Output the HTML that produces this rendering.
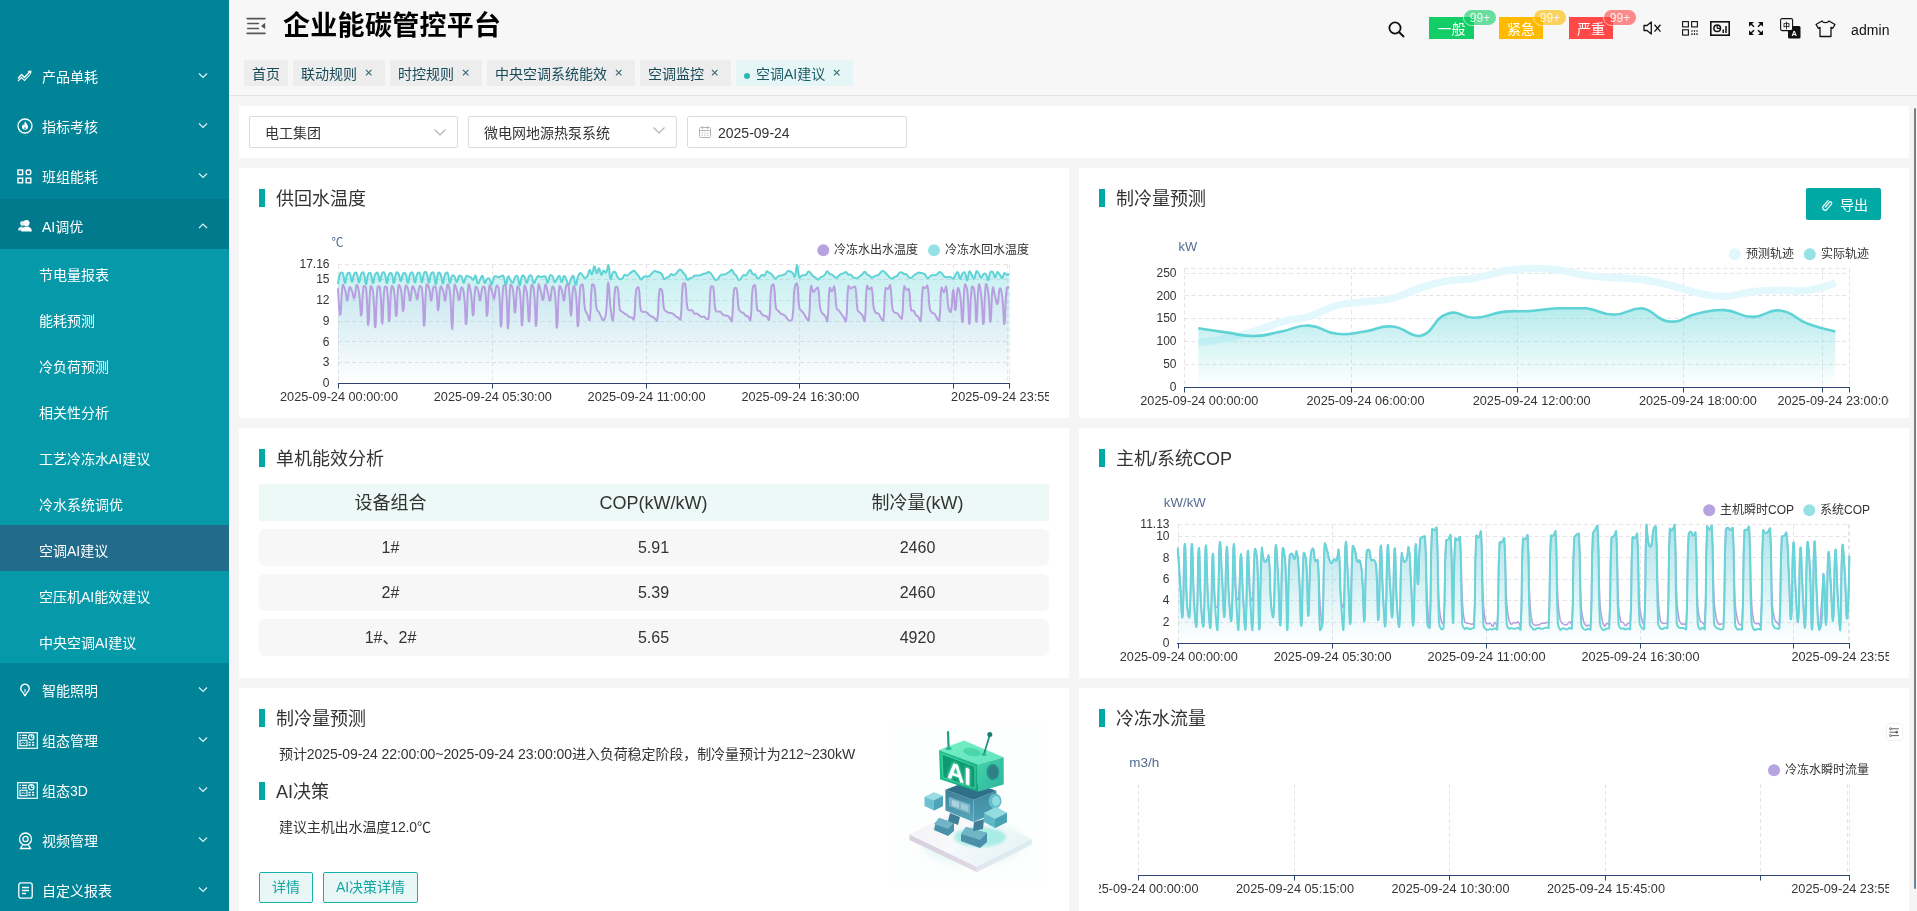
<!DOCTYPE html><html lang="zh-CN"><head><meta charset="utf-8"><title>企业能碳管控平台</title><style>
*{box-sizing:border-box;margin:0;padding:0}
html,body{width:1917px;height:911px;overflow:hidden}
html{background:#f5f5f5}
body{position:relative;background:#f5f5f5;opacity:.9999;font-family:"Liberation Sans", "Noto Sans CJK SC", sans-serif;font-size:14px;color:#333}
.abs{position:absolute}
#side{position:absolute;left:0;top:0;width:229px;height:911px;background:#028498;color:#fff;overflow:hidden}
#side .it{position:absolute;left:0;width:229px;height:50px;line-height:50px;font-size:14px;white-space:nowrap}
#side .it .tx{position:absolute;left:42px;top:3px}
#side .it svg.ic{position:absolute;left:17px;top:19px}
#side .it svg.ar{position:absolute;left:198px;top:23px}
#side .sub{position:absolute;left:0;width:229px;height:46px;line-height:46px;font-size:14px;background:#0699a9;white-space:nowrap}
#side .sub span{position:absolute;left:39px;top:3px}
#side .sub.on{background:#226b8a}
#head{position:absolute;left:229px;top:0;width:1688px;height:96px;background:#f7f7f7;border-bottom:1px solid #e2e2e2}
.title{position:absolute;left:54px;top:7px;letter-spacing:.3px;font-size:27px;font-weight:bold;color:#000;line-height:38px;white-space:nowrap;}
.tag{position:absolute;top:60px;height:26px;line-height:26px;background:#ededed;color:#174a58;font-size:14px;white-space:nowrap}
.tag span{position:absolute;top:1px}
.tag .x{font-size:12px;color:#1d4e5f}
.tag.on{background:#e6f6f6;color:#1c5a66}
.card{position:absolute;background:#fff}
.ct{position:absolute;font-size:18px;color:#333;line-height:26px;white-space:nowrap}
.bar{position:absolute;width:6px;height:18px;background:#00a9a3}
.sel{position:absolute;top:10px;height:32px;border:1px solid #dcdcdc;border-radius:2px;background:#fff;font-size:14px;line-height:30px;color:#333;white-space:nowrap}
.row{position:absolute;left:20px;width:790px;height:37.2px;background:#f7f7f7;border-radius:6px;font-size:16px;line-height:37px;color:#333}
.row span,.th span{position:absolute;top:0;width:263px;text-align:center}
.th span{top:1px}
.th{position:absolute;left:20px;width:790px;height:37px;background:#edf9f7;font-size:18px;line-height:37px;color:#333}
.btn{position:absolute;height:30.4px;line-height:28.4px;border:1px solid #18b2ac;background:#e8f7f6;color:#10a6a2;font-size:14px;text-align:center;border-radius:2px;white-space:nowrap}
svg text{font-family:"Liberation Sans", "Noto Sans CJK SC", sans-serif}
</style></head><body>
<div id="side"><div class="it" style="top:49px"><svg class="ic" style="top:21px" width="16" height="12" viewBox="0 0 16 12"><path d="M1 8.5 L4.5 4.5 L7.5 7.5 L12.5 2" fill="none" stroke="#fff" stroke-width="1.3"/><path d="M1 11 L4.5 7.5 L7.5 10.5 L13 4.5" fill="none" stroke="#fff" stroke-width="1.1"/><path d="M10.5 1 L14.5 0.5 L14 4.5 Z" fill="#fff"/></svg><span class="tx">产品单耗</span><svg class="ar" width="10" height="7" viewBox="0 0 10 7"><path d="M1 1.5 L5 5.5 L9 1.5" fill="none" stroke="#fff" stroke-width="1.1" opacity=".9"/></svg></div><div class="it" style="top:99px"><svg class="ic" style="top:19px" width="16" height="16" viewBox="0 0 16 16"><circle cx="8" cy="8" r="7" fill="none" stroke="#fff" stroke-width="1.3"/><path d="M8 3.2 C8.6 5 11 6.2 11 8.8 A3 3 0 0 1 5 8.8 C5 7.6 5.6 7 6.2 6.2 C6.6 7 6.9 7.2 7.3 7.4 C7.2 6 7.4 4.6 8 3.2 Z" fill="#fff"/><path d="M8 9 C8.8 9.8 9 10.6 8 11.6 C7 10.6 7.2 9.8 8 9Z" fill="#028498"/></svg><span class="tx">指标考核</span><svg class="ar" width="10" height="7" viewBox="0 0 10 7"><path d="M1 1.5 L5 5.5 L9 1.5" fill="none" stroke="#fff" stroke-width="1.1" opacity=".9"/></svg></div><div class="it" style="top:149px"><svg class="ic" style="top:20px" width="15" height="15" viewBox="0 0 15 15"><g fill="none" stroke="#fff" stroke-width="1.4"><rect x="1" y="1" width="4.6" height="4.6"/><rect x="9.2" y="1" width="4.6" height="4.6" rx="1.6"/><rect x="1" y="9.2" width="4.6" height="4.6"/><rect x="9.2" y="9.2" width="4.6" height="4.6"/></g></svg><span class="tx">班组能耗</span><svg class="ar" width="10" height="7" viewBox="0 0 10 7"><path d="M1 1.5 L5 5.5 L9 1.5" fill="none" stroke="#fff" stroke-width="1.1" opacity=".9"/></svg></div><div class="it" style="top:199px;background:#007a8c"><svg class="ic" style="top:19.5px" width="16" height="14" viewBox="0 0 16 14"><circle cx="5.5" cy="4.5" r="2.4" fill="#fff" opacity=".85"/><path d="M1 11.5 C1 8.5 3 7.5 5.5 7.5 V11.5Z" fill="#fff" opacity=".85"/><circle cx="9.5" cy="4" r="3.1" fill="#fff"/><path d="M4.2 12.5 C4.2 9 6.5 7.6 9.5 7.6 C12.5 7.6 14.8 9 14.8 12.5 Z" fill="#fff"/></svg><span class="tx">AI调优</span><svg class="ar" width="10" height="7" viewBox="0 0 10 7"><path d="M1 6 L5 2 L9 6" fill="none" stroke="#fff" stroke-width="1.1" opacity=".9"/></svg></div><div class="sub" style="top:249px"><span>节电量报表</span></div><div class="sub" style="top:295px"><span>能耗预测</span></div><div class="sub" style="top:341px"><span>冷负荷预测</span></div><div class="sub" style="top:387px"><span>相关性分析</span></div><div class="sub" style="top:433px"><span>工艺冷冻水AI建议</span></div><div class="sub" style="top:479px"><span>冷水系统调优</span></div><div class="sub on" style="top:525px"><span>空调AI建议</span></div><div class="sub" style="top:571px"><span>空压机AI能效建议</span></div><div class="sub" style="top:617px"><span>中央空调AI建议</span></div><div class="it" style="top:663px"><svg class="ic" style="left:19px;top:20px" width="12" height="15" viewBox="0 0 12 15"><path d="M6 1.2 A4.3 4.3 0 0 1 8.4 9 L6 12.8 L3.6 9 A4.3 4.3 0 0 1 6 1.2Z" fill="none" stroke="#fff" stroke-width="1.3" stroke-linejoin="round"/><path d="M6 6 V9.5" stroke="#fff" stroke-width="1"/></svg><span class="tx">智能照明</span><svg class="ar" width="10" height="7" viewBox="0 0 10 7"><path d="M1 1.5 L5 5.5 L9 1.5" fill="none" stroke="#fff" stroke-width="1.1" opacity=".9"/></svg></div><div class="it" style="top:713px"><svg class="ic" style="left:17px;top:18.6px" width="21" height="17" viewBox="0 0 21 17"><rect x="0.7" y="0.7" width="19.6" height="15.6" fill="none" stroke="#fff" stroke-width="1.2"/><path d="M2.6 3.3h1.2M5 3.3h5M2.6 5.8h1.2M5 5.8h5" stroke="#fff" stroke-width="1.2"/><rect x="3" y="8.3" width="7" height="5.4" fill="none" stroke="#fff" stroke-width="1.1"/><path d="M4.2 12.2l1.6-2 1.4 1.4 1.4-1.2" stroke="#fff" stroke-width="0.8" fill="none"/><circle cx="14.3" cy="5.3" r="2.7" fill="none" stroke="#fff" stroke-width="1.1"/><path d="M14.3 5.3V2.6M14.3 5.3H17" stroke="#fff" stroke-width="0.9"/><path d="M11.5 10.5h2.2M15 10.5h2.2M11.5 13h2.2M15 13h2.2" stroke="#fff" stroke-width="1.3"/></svg><span class="tx">组态管理</span><svg class="ar" width="10" height="7" viewBox="0 0 10 7"><path d="M1 1.5 L5 5.5 L9 1.5" fill="none" stroke="#fff" stroke-width="1.1" opacity=".9"/></svg></div><div class="it" style="top:763px"><svg class="ic" style="left:17px;top:18.6px" width="21" height="17" viewBox="0 0 21 17"><rect x="0.7" y="0.7" width="19.6" height="15.6" fill="none" stroke="#fff" stroke-width="1.2"/><path d="M2.6 3.3h1.2M5 3.3h5M2.6 5.8h1.2M5 5.8h5" stroke="#fff" stroke-width="1.2"/><rect x="3" y="8.3" width="7" height="5.4" fill="none" stroke="#fff" stroke-width="1.1"/><path d="M4.2 12.2l1.6-2 1.4 1.4 1.4-1.2" stroke="#fff" stroke-width="0.8" fill="none"/><circle cx="14.3" cy="5.3" r="2.7" fill="none" stroke="#fff" stroke-width="1.1"/><path d="M14.3 5.3V2.6M14.3 5.3H17" stroke="#fff" stroke-width="0.9"/><path d="M11.5 10.5h2.2M15 10.5h2.2M11.5 13h2.2M15 13h2.2" stroke="#fff" stroke-width="1.3"/></svg><span class="tx">组态3D</span><svg class="ar" width="10" height="7" viewBox="0 0 10 7"><path d="M1 1.5 L5 5.5 L9 1.5" fill="none" stroke="#fff" stroke-width="1.1" opacity=".9"/></svg></div><div class="it" style="top:813px"><svg class="ic" style="left:18px;top:18.5px" width="15" height="18" viewBox="0 0 15 18"><circle cx="7.5" cy="7" r="6" fill="none" stroke="#fff" stroke-width="1.3"/><circle cx="7.5" cy="7" r="2.6" fill="none" stroke="#fff" stroke-width="1.3"/><path d="M4.5 13 L2.5 16.5 H12.5 L10.5 13" fill="none" stroke="#fff" stroke-width="1.3"/></svg><span class="tx">视频管理</span><svg class="ar" width="10" height="7" viewBox="0 0 10 7"><path d="M1 1.5 L5 5.5 L9 1.5" fill="none" stroke="#fff" stroke-width="1.1" opacity=".9"/></svg></div><div class="it" style="top:863px"><svg class="ic" style="left:18px;top:18.5px" width="15" height="17" viewBox="0 0 15 17"><rect x="0.8" y="0.8" width="13.4" height="15.4" rx="2.2" fill="none" stroke="#fff" stroke-width="1.3"/><path d="M4 5.5H11M4 8.5H11M4 11.5H8" stroke="#fff" stroke-width="1.3"/></svg><span class="tx">自定义报表</span><svg class="ar" width="10" height="7" viewBox="0 0 10 7"><path d="M1 1.5 L5 5.5 L9 1.5" fill="none" stroke="#fff" stroke-width="1.1" opacity=".9"/></svg></div></div>
<div id="head"><svg class="abs" style="left:17px;top:17px" width="20" height="18" viewBox="0 0 20 18"><path d="M1.2 1.6H19M1.8 6.5H12.4M1.8 11.5H12.4M1.2 16.4H19" stroke="#555" stroke-width="1.6" stroke-linecap="round" fill="none"/><path d="M19.2 5.8 L15 9 L19.2 12.2Z" fill="#555"/></svg><div class="title">企业能碳管控平台</div><div class="tag" style="left:15px;width:44px"><span style="left:8px">首页</span></div><div class="tag" style="left:64px;width:92px"><span style="left:8px">联动规则</span><svg class="abs" style="right:12.5px;top:9px" width="7.4" height="7.4" viewBox="0 0 8 8"><path d="M1 1L7 7M7 1L1 7" stroke="#35606e" stroke-width="1.15" fill="none"/></svg></div><div class="tag" style="left:161px;width:92px"><span style="left:8px">时控规则</span><svg class="abs" style="right:12.5px;top:9px" width="7.4" height="7.4" viewBox="0 0 8 8"><path d="M1 1L7 7M7 1L1 7" stroke="#35606e" stroke-width="1.15" fill="none"/></svg></div><div class="tag" style="left:258px;width:148px"><span style="left:8px">中央空调系统能效</span><svg class="abs" style="right:12.5px;top:9px" width="7.4" height="7.4" viewBox="0 0 8 8"><path d="M1 1L7 7M7 1L1 7" stroke="#35606e" stroke-width="1.15" fill="none"/></svg></div><div class="tag" style="left:411px;width:91px"><span style="left:8px">空调监控</span><svg class="abs" style="right:12.5px;top:9px" width="7.4" height="7.4" viewBox="0 0 8 8"><path d="M1 1L7 7M7 1L1 7" stroke="#35606e" stroke-width="1.15" fill="none"/></svg></div><div class="tag on" style="left:507px;width:117px"><i class="abs" style="left:7.5px;top:12.7px;width:6.6px;height:6.6px;border-radius:4px;background:#2db7b0"></i><span style="left:20px">空调AI建议</span><svg class="abs" style="right:12.5px;top:9px" width="7.4" height="7.4" viewBox="0 0 8 8"><path d="M1 1L7 7M7 1L1 7" stroke="#2a6670" stroke-width="1.15" fill="none"/></svg></div><svg class="abs" style="left:1159px;top:21px" width="17" height="17" viewBox="0 0 17 17"><circle cx="7" cy="7" r="5.6" fill="none" stroke="#111" stroke-width="1.8"/><path d="M11 11 L16 16" stroke="#111" stroke-width="2"/></svg><div class="abs" style="left:1200px;top:17px;width:45px;height:22px;background:#13ce66;color:#fff;font-size:14px;line-height:22px;text-align:center;white-space:nowrap"><span style="position:relative;top:1px">一般</span></div><div class="abs" style="left:1233.7px;top:8.5px;width:34.6px;height:17.8px;border-radius:9px;border:1px solid #fff;background:#13ce66;opacity:.62"></div><div class="abs" style="left:1235px;top:9.5px;width:32px;height:16px;color:#fff;font-size:12px;line-height:16px;text-align:center;opacity:.85">99+</div><div class="abs" style="left:1270px;top:17px;width:44px;height:22px;background:#ffba00;color:#fff;font-size:14px;line-height:22px;text-align:center;white-space:nowrap"><span style="position:relative;top:1px">紧急</span></div><div class="abs" style="left:1303.7px;top:8.5px;width:34.6px;height:17.8px;border-radius:9px;border:1px solid #fff;background:#ffba00;opacity:.62"></div><div class="abs" style="left:1305px;top:9.5px;width:32px;height:16px;color:#fff;font-size:12px;line-height:16px;text-align:center;opacity:.85">99+</div><div class="abs" style="left:1340px;top:17px;width:44px;height:22px;background:#ff4949;color:#fff;font-size:14px;line-height:22px;text-align:center;white-space:nowrap"><span style="position:relative;top:1px">严重</span></div><div class="abs" style="left:1373.7px;top:8.5px;width:34.6px;height:17.8px;border-radius:9px;border:1px solid #fff;background:#ff4949;opacity:.62"></div><div class="abs" style="left:1375px;top:9.5px;width:32px;height:16px;color:#fff;font-size:12px;line-height:16px;text-align:center;opacity:.85">99+</div><svg class="abs" style="left:1414px;top:21px" width="19" height="14" viewBox="0 0 19 14"><path d="M1 4.5 H4 L8.3 1 V13 L4 9.5 H1Z" fill="none" stroke="#111" stroke-width="1.3" stroke-linejoin="round"/><path d="M11.5 3.8 L17.5 10.6 M17.5 3.8 L11.5 10.6" stroke="#111" stroke-width="1.3"/></svg><svg class="abs" style="left:1453px;top:21px" width="17" height="15" viewBox="0 0 17 15"><g fill="none" stroke="#111" stroke-width="1.1"><rect x="0.6" y="0.6" width="5.8" height="5.3"/><rect x="9.6" y="0.6" width="5.8" height="5.3"/><rect x="0.6" y="8.8" width="5.8" height="5.3"/></g><path d="M10 9.3v1.4M12.5 9.3v1.4M15 9.3v1.4M10 12.3v1.8M12.5 12.3v1.8M15 12.3v1.8" stroke="#111" stroke-width="1.2"/></svg><svg class="abs" style="left:1481px;top:21px" width="20" height="15" viewBox="0 0 20 15"><rect x="0.8" y="0.8" width="18.4" height="13.4" fill="none" stroke="#111" stroke-width="1.6"/><circle cx="7.2" cy="7.3" r="3.3" fill="none" stroke="#111" stroke-width="1.5"/><path d="M7.2 7.3V4M7.2 7.3H10.5" stroke="#111" stroke-width="1.2"/><path d="M13.2 12V8.5M16 12V5" stroke="#111" stroke-width="1.5"/></svg><svg class="abs" style="left:1520px;top:22px" width="14" height="13" viewBox="0 0 14 13"><g stroke="#111" stroke-width="1.5" fill="#111"><path d="M1 1 L5 4.8M13 1 L9 4.8M1 12 L5 8.2M13 12 L9 8.2" fill="none"/><path d="M0 0H5L0 4.8Z M14 0H9L14 4.8Z M0 13H5L0 8.2Z M14 13H9L14 8.2Z" stroke="none"/></g></svg><svg class="abs" style="left:1551px;top:18px" width="21" height="21" viewBox="0 0 21 21"><rect x="8" y="8" width="12.5" height="12.5" rx="1.5" fill="#111"/><rect x="0.6" y="0.6" width="12" height="12" rx="1.5" fill="#f7f7f7" stroke="#111" stroke-width="1.1"/><text x="6.6" y="9.6" font-size="7" text-anchor="middle" fill="#111" font-weight="bold">中</text><text x="14.3" y="18" font-size="7.5" text-anchor="middle" fill="#fff" font-weight="bold">A</text></svg><svg class="abs" style="left:1586px;top:20px" width="21" height="18" viewBox="0 0 21 18"><path d="M7 1 C8 3.2 13 3.2 14 1 L20 4.5 L17.6 8.3 L16 7.4 V16.5 H5 V7.4 L3.4 8.3 L1 4.5 Z" fill="none" stroke="#111" stroke-width="1.3" stroke-linejoin="round"/></svg><div class="abs" style="left:1622px;top:20px;font-size:14px;line-height:20px;color:#111;letter-spacing:0.1px">admin</div></div>
<div class="card" style="left:239px;top:106px;width:1670px;height:52px">
<div class="sel" style="left:10px;width:208.6px"><span class="abs" style="left:15px;top:1px">电工集团</span>
<svg class="abs" style="left:183px;top:11px" width="14" height="9" viewBox="0 0 14 9"><path d="M1.5 1.5 L7 7 L12.5 1.5" fill="none" stroke="#b0b3ba" stroke-width="1.2"/></svg></div>
<div class="sel" style="left:229.1px;width:208.6px"><span class="abs" style="left:15px;top:1px">微电网地源热泵系统</span>
<svg class="abs" style="left:183px;top:9px" width="14" height="9" viewBox="0 0 14 9"><path d="M1.5 1.5 L7 7 L12.5 1.5" fill="none" stroke="#b0b3ba" stroke-width="1.2"/></svg></div>
<div class="sel" style="left:448px;width:220px"><span class="abs" style="left:30px;top:1px">2025-09-24</span>
<svg class="abs" style="left:10px;top:8px" width="14" height="14" viewBox="0 0 14 14"><rect x="1.5" y="2.5" width="11" height="10" rx="1" fill="none" stroke="#b5b5b5" stroke-width="1"/><path d="M1.5 5.5H12.5M4.5 1V4M9.5 1V4" stroke="#b5b5b5" stroke-width="1" fill="none"/><path d="M3.5 8h1.5M6.2 8h1.5M9 8h1.5M3.5 10.3h1.5M6.2 10.3h1.5M9 10.3h1.5" stroke="#c2c2c2" stroke-width="1"/></svg></div>
</div>
<div class="card" style="left:239px;top:168px;width:830px;height:250px"><div class="bar" style="left:20px;top:21px"></div><div class="ct" style="left:37px;top:18px">供回水温度</div><svg class="abs" style="left:20px;top:40px;overflow:hidden" width="790" height="210" viewBox="259 208 790 210"><defs><linearGradient id="g10" x1="0" y1="0" x2="0" y2="1"><stop offset="0" stop-color="#b8a0e0" stop-opacity="0.16"/><stop offset="1" stop-color="#b8a0e0" stop-opacity="0.0"/></linearGradient><linearGradient id="g11" x1="0" y1="0" x2="0" y2="1"><stop offset="0" stop-color="#5fd3d6" stop-opacity="0.36"/><stop offset="1" stop-color="#5fd3d6" stop-opacity="0.0"/></linearGradient></defs><path d="M338 362.5H1009.1" stroke="#e4e4e7" stroke-width="1" stroke-dasharray="4 3" fill="none"/><path d="M338 341.5H1009.1" stroke="#e4e4e7" stroke-width="1" stroke-dasharray="4 3" fill="none"/><path d="M338 321.5H1009.1" stroke="#e4e4e7" stroke-width="1" stroke-dasharray="4 3" fill="none"/><path d="M338 300.5H1009.1" stroke="#e4e4e7" stroke-width="1" stroke-dasharray="4 3" fill="none"/><path d="M338 279.5H1009.1" stroke="#e4e4e7" stroke-width="1" stroke-dasharray="4 3" fill="none"/><path d="M338 264.5H1009.1" stroke="#e4e4e7" stroke-width="1" stroke-dasharray="4 3" fill="none"/><path d="M338.5 264.5V383.5" stroke="#e4e4e7" stroke-width="1" stroke-dasharray="4 3" fill="none"/><path d="M492.5 264.5V383.5" stroke="#e4e4e7" stroke-width="1" stroke-dasharray="4 3" fill="none"/><path d="M646.5 264.5V383.5" stroke="#e4e4e7" stroke-width="1" stroke-dasharray="4 3" fill="none"/><path d="M799.5 264.5V383.5" stroke="#e4e4e7" stroke-width="1" stroke-dasharray="4 3" fill="none"/><path d="M953.5 264.5V383.5" stroke="#e4e4e7" stroke-width="1" stroke-dasharray="4 3" fill="none"/><path d="M1007.5 264.5V383.5" stroke="#e4e4e7" stroke-width="1" stroke-dasharray="4 3" fill="none"/><path d="M1009.5 264.5V383.5" stroke="#e4e4e7" stroke-width="1" stroke-dasharray="4 3" fill="none"/><path d="M338 288.3C338 288.3 339.2 315.5 340.3 314.7C341.6 313.9 340.7 296 342.7 285.2C343 283.4 344.3 287.2 345 289.5C346.6 294.8 346.3 300.9 347.3 300.4C348.6 299.8 347.9 290.7 349.7 287.3C350.2 286.1 351.1 289.1 352 291.2C353.4 294.6 353.5 299.3 354.3 298.2C355.8 296.2 355.2 286.9 356.6 285C357.5 284 358.4 288.6 359 292.4C360.7 303.8 360.3 316.8 361.3 315.4C362.6 313.8 361.5 299.2 363.6 286.4C363.8 285.3 365.8 286.3 366 287.6C368.1 305.8 367.1 325.6 368.3 325.3C369.5 325.1 368.6 301.3 370.6 286.5C370.9 284.4 372.6 288.8 373 291.5C375 309.2 374.2 328.4 375.3 327.3C376.5 326.1 375.4 305.9 377.6 286.9C377.7 285.8 379.8 286 379.9 287.1C382.1 304.6 381.1 324.2 382.3 324.2C383.4 324.2 382.4 304.4 384.6 287.1C384.7 286 386.8 286.4 386.9 287.5C389.1 303.5 388.1 321.7 389.3 321.4C390.4 321.1 389.5 300.3 391.6 286.4C391.9 284.7 393.6 288.1 393.9 290.2C395.9 302.9 395.2 317.1 396.3 316C397.5 314.7 396.6 296.9 398.6 285.5C398.9 283.7 400.5 287.3 400.9 289.6C402.8 300.1 402.2 311.9 403.2 311C404.5 310 403.5 295.5 405.6 285.8C405.9 284.3 407.3 287 407.9 288.8C409.7 294.3 409.2 301 410.2 300.5C411.5 299.8 410.8 290.1 412.6 286.5C413.2 285.3 414 288.5 414.9 290.7C416.4 294.7 416.3 299.7 417.2 298.8C418.6 297.6 417.7 290.6 419.6 286.4C420 285.4 421.7 286.9 421.9 288.4C424 306.6 423.1 326.6 424.2 325.7C425.4 324.8 424.4 302.6 426.5 284.8C426.7 283.3 428.4 285.6 428.9 287.1C430.8 293.6 430 300.8 431.2 300.8C432.4 300.8 431.6 292.6 433.5 287C433.9 286 435.6 286.5 435.9 287.6C438 298.2 437.1 310.6 438.2 310.4C439.4 310.2 438.5 295.5 440.5 286.7C440.9 285.3 442.2 288.2 442.9 290C444.6 295 444.3 301.6 445.2 300.5C446.6 298.9 445.9 288 447.5 284.7C448.2 283.3 449.5 287.7 449.9 291.1C451.8 309.9 451.1 329.2 452.2 329.2C453.4 327.6 452.4 302.7 454.5 285.2C454.8 283.1 456 287.5 456.8 290C458.4 294.8 458.1 300.4 459.2 299.8C460.5 299.1 459.9 290 461.5 287.4C462.2 286.3 463.5 289.8 463.8 292.5C465.8 308.1 465.1 325.9 466.2 324.1C467.5 322 466.5 298.2 468.5 284.8C468.9 282.3 470.2 288.3 470.8 292.1C472.6 303.5 472.1 316.4 473.2 315.3C474.4 313.9 473.4 298.6 475.5 287.1C475.7 285.7 477.3 288 477.8 289.6C479.6 294.6 479.1 300.9 480.1 300.4C481.4 299.7 480.5 292.6 482.5 287.3C482.8 286.4 484.6 286.7 484.8 287.8C487 300.9 486 316.4 487.1 315.8C488.3 315.2 487.5 296 489.5 285.5C489.8 283.5 490.8 288 491.8 290.7C493.2 294.5 493.2 299.5 494.1 298.5C495.5 297.1 494.7 289.7 496.5 285.9C497 284.8 498.6 287.1 498.8 288.9C500.9 307.4 500 327.3 501.1 326.6C502.3 325.8 501.2 304.8 503.4 285.9C503.6 284.8 505.6 285.4 505.8 286.6C508 306.7 507 328.8 508.1 328.4C509.3 328.1 508.3 303.2 510.4 285.2C510.6 283.4 512.4 286.7 512.8 288.8C514.7 300.4 514 313.1 515.1 312.6C516.3 312.1 515.5 295.9 517.4 286.8C517.8 285.1 519.5 288.7 519.8 291.1C521.8 308 521 326.5 522.1 325.3C523.3 324 522.4 300.4 524.4 286.1C524.7 283.8 526.3 288.9 526.7 292.1C528.7 306.6 528 322.9 529.1 321.4C530.4 319.5 529.3 300.3 531.4 285.3C531.6 283.8 533.5 286.5 533.7 288.3C535.9 306.7 535 326.8 536.1 325.9C537.3 325 536.4 300 538.4 284.8C538.7 282.4 539.8 287.7 540.7 290.7C542.1 295.2 542.2 300.9 543.1 299.8C544.5 297.9 543.8 287.4 545.4 284.8C546.2 283.5 546.6 288.4 547.7 292C549 296.2 549.1 301.5 550 300.5C551.5 298.9 550.7 290.2 552.4 286.7C553 285.5 554.4 288.6 554.7 291.1C556.8 309.1 555.9 328.7 557 327.6C558.3 326.4 557.3 303.5 559.4 286.4C559.6 284.7 561 288 561.7 289.9C563.4 294.9 563.1 301.4 564 300.3C565.4 298.8 564.4 290.4 566.4 284.8C566.7 283.7 568.5 285.3 568.7 286.8C570.8 300.9 569.9 316 571 316C572.2 316 571.4 296.8 573.4 286.8C573.7 284.8 575.3 289.2 575.7 292.1C577.7 308.9 576.9 327.3 578 326.1C579.3 324.7 578.2 306 580.3 286.9C580.5 285.4 582.4 283.4 582.7 284.7C584.7 294.7 583.1 297.3 585 309.4C585.4 311.9 586.3 311.7 587.3 314.1C588.6 316.9 589.3 322.1 589.7 319.9C591.6 307.5 589.8 301 592 285C592.1 283.9 594.1 284.5 594.3 285.6C596.4 296.6 594.6 297.7 596.7 309.2C597 311.1 598 310.6 599 312.3C600.3 314.6 600 314.9 601.3 317.2C602.3 318.9 602.9 321 603.6 320.3C605.2 318.8 605.5 316.7 606 312.8C607.8 297.6 607 283.4 608.3 282.3C609.4 282.3 609 295.4 610.6 308.4C611.4 314.3 612.3 322.9 613 320.1C614.7 312.6 613.1 303.1 615.3 287.8C615.5 286.7 617.4 286.3 617.6 287.4C619.7 297.4 617.9 299.2 620 310C620.2 311.4 621.1 310.8 622.3 311.7C623.5 312.6 623.4 312.8 624.6 313.6C625.7 314.3 625.9 314 626.9 314.7C628.3 315.7 627.9 316.2 629.3 317C630.3 317.6 630.6 316.8 631.6 317.3C632.9 318 633.7 320.6 633.9 319.3C636.1 306.7 634.1 303.9 636.3 289.4C636.5 288 638.3 286.3 638.6 287.6C640.7 296.9 638.8 299.7 640.9 310.6C641.2 311.9 642 311.7 643.3 312C644.3 312.3 644.5 311.5 645.6 311.9C646.9 312.3 646.8 312.6 647.9 313.5C649.2 314.5 648.9 314.8 650.2 315.8C651.3 316.5 651.5 316.2 652.6 316.8C653.8 317.6 653.8 317.7 654.9 318.6C656.1 319.6 657 321.9 657.2 320.6C659.4 307.3 657.4 303.5 659.6 289.4C659.7 288.3 661.6 289 661.9 290.1C664 299 662.2 300.1 664.2 309.3C664.6 310.8 665.3 310.6 666.6 311.5C667.6 312.4 667.6 312.5 668.9 312.9C670 313.2 670.1 312.7 671.2 313C672.4 313.3 672.5 313.4 673.5 314.1C674.9 315.1 674.6 315.4 675.9 316.5C676.9 317.3 677.1 317 678.2 317.7C679.4 318.5 680.4 320.8 680.5 319.5C682.7 304 680.7 300.8 682.9 284.1C683 283 685 282.9 685.2 284C687.3 295.2 685.4 296.8 687.5 308.6C687.8 310 688.6 309.9 689.9 310.4C690.9 310.7 691.4 309.6 692.2 310.2C693.7 311.3 693 312.6 694.5 313.7C695.4 314.3 695.8 313.3 696.9 313.6C698.1 314 698.1 314.3 699.2 315.1C700.4 316 700.2 316.6 701.5 317C702.5 317.3 702.8 316.1 703.8 316.5C705.2 316.9 704.8 318 706.2 318.6C707.2 319.1 708.3 319.8 708.5 318.7C710.7 303.9 708.7 301.7 710.8 286.9C711 285.8 713 286 713.2 287C715.3 297.6 713.4 299.1 715.5 310.1C715.8 311.4 716.5 311.4 717.8 311.8C718.9 312.1 719.2 311 720.2 311.5C721.6 312.3 721.1 313.2 722.5 314.3C723.4 315.1 723.6 315 724.8 315.4C725.9 315.7 726.1 315.2 727.1 315.7C728.4 316.3 728.5 316.4 729.5 317.5C730.9 319 731.5 322.7 731.8 321C733.9 308.5 732 304.4 734.1 289.2C734.3 288 736.2 287.3 736.5 288.3C738.5 297 736.9 298.8 738.8 308.7C739.2 310.7 739.7 310.7 741.1 312.1C742 312.9 742.5 312.3 743.5 313C744.8 314.1 744.4 314.6 745.8 315.7C746.8 316.4 747.3 315.7 748.1 316.5C749.6 318 750.2 321.9 750.4 320.2C752.5 307.3 750.6 303.3 752.8 287.4C753 285.9 754.9 284.2 755.1 285.5C757.2 295.7 755.3 298.8 757.4 310.4C757.6 311.5 758.9 310.2 759.8 311C761.3 312.3 760.7 313.1 762.1 314.5C763 315.3 763.3 315 764.4 315.6C765.6 316.1 765.8 315.7 766.8 316.5C768.2 317.8 768.8 321.2 769.1 319.6C771.2 306.4 769.3 302.8 771.4 286.9C771.6 285.4 773.5 283.6 773.7 284.9C775.8 294.4 774 297.1 776.1 308.6C776.4 310.2 777.3 309.8 778.4 311C779.6 312.2 779.4 312.5 780.7 313.5C781.7 314.3 782 313.9 783.1 314.5C784.3 315.2 784.4 315.1 785.4 316.1C786.8 317.5 786.3 317.9 787.7 319.3C788.7 320.2 789 320.9 790.1 320.7C791.3 320.4 792.2 319.9 792.4 318.3C794.5 303.1 792.7 302.4 794.7 287.1C795 285.1 796.7 282.3 797.1 283.6C799 292.7 797.4 296.3 799.4 308.2C799.7 310 800.5 309.7 801.7 311.1C802.8 312.5 803.1 312.3 804 313.8C805.4 315.8 805 316.1 806.4 318.1C807.3 319.4 808.5 321.7 808.7 320.3C810.8 305.8 809.1 298.3 811 286.2C811.4 284 811.9 290.9 813.4 291.9C814.2 292.4 814.4 290.4 815.7 289.3C816.7 288.4 817.8 286.7 818 287.8C820.1 296.5 818.5 298.5 820.4 308.9C820.8 311.6 821.2 311.6 822.7 313.8C823.5 315 824.2 314.5 825 315.7C826.6 318.1 827 323.1 827.3 321C829.3 309.3 827.6 301.3 829.7 288C829.9 286.4 831 291.6 832 291.3C833.3 290.9 833.9 285 834.3 286.6C836.2 293.5 834.6 298 836.7 308.4C837 310 838 309.4 839 310.6C840.3 312.2 840.2 312.3 841.3 314C842.5 315.7 842.5 315.6 843.7 317.3C844.9 319.1 845.7 322.7 846 321C848.1 307.2 846.2 301.2 848.3 286.3C848.5 284.9 849.4 288.2 850.6 288.5C851.7 288.7 851.7 287.5 853 287.1C854.1 286.8 855.1 286.1 855.3 287.1C857.4 297.4 855.6 298.8 857.6 309.9C858 311.7 858.7 311.4 860 312.8C861.1 314 861.5 313.7 862.3 315.1C863.8 317.7 864.3 322.9 864.6 320.8C866.6 308.5 864.9 300.3 867 286.1C867.2 284.5 867.9 288.8 869.3 289.3C870.3 289.6 871.3 286.6 871.6 287.7C873.7 296.4 872.1 298.5 873.9 308.8C874.4 311.2 874.7 311.5 876.3 313.1C877 313.9 877.9 312.8 878.6 313.6C880.2 315.3 879.5 316.1 880.9 318.2C881.8 319.5 883.1 321.9 883.3 320.5C885.4 306.9 883.4 302.9 885.6 288.2C885.8 287.1 887.1 289.4 887.9 288.9C889.4 288 889.9 284 890.3 285.5C892.2 294.2 890.6 297.7 892.6 309.3C892.9 311.3 893.4 311.4 894.9 312.7C895.8 313.4 896.4 312.5 897.2 313.2C898.7 314.3 898.3 314.9 899.6 316.3C900.6 317.5 901.7 319.7 901.9 318.4C904 304.8 902.2 299.2 904.2 286.5C904.5 284.9 905.1 289 906.6 289.8C907.5 290.3 908.7 287.9 908.9 289C911 298.2 909.1 300.5 911.2 310.3C911.5 311.4 912.8 310 913.6 310.8C915.1 312.4 914.4 313.2 915.9 315.1C916.7 316.1 917.4 315.5 918.2 316.6C919.7 318.4 920.3 322.7 920.6 320.9C922.6 308.1 920.7 302.5 922.9 287.3C923 286.2 924.2 288.4 925.2 288.1C926.6 287.6 927.3 284.4 927.5 285.7C929.6 294.9 927.9 297.7 929.9 309.1C930.2 311.2 930.7 311.2 932.2 312.7C933.1 313.6 933.7 312.8 934.5 313.8C936.1 315.6 935.5 316.1 936.9 318.2C937.8 319.5 939 321.9 939.2 320.5C941.3 306.7 939.5 300 941.5 287.8C941.8 285.9 942.8 292.5 943.9 292.2C945.1 292 945.7 285.1 946.2 286.8C948 293 946.6 297.7 948.5 308.1C948.9 310.2 950.5 313.4 950.8 311.8C952.8 304.3 952 290.5 953.2 290C954.3 289.6 954.4 310.4 955.5 310C956.7 309.5 956.1 293.5 957.8 288.3C958.5 286.4 959.6 291.9 960.2 295.8C962 308.7 961.5 324 962.5 321.8C963.9 318.6 962.8 298.7 964.8 284.9C965.1 282.8 966.8 287.2 967.2 289.9C969.2 306.7 968.4 324.5 969.5 323.9C970.7 323.1 969.7 302.9 971.8 287C972 285.6 973.9 287.7 974.1 289.3C976.3 305.1 975.4 322.8 976.5 321.8C977.7 320.6 977 295.5 978.8 284.7C979.3 282.3 980.5 289.5 981.1 294.4C982.9 309.1 982.5 326 983.5 323.9C984.8 321.1 983.8 298.5 985.8 284.6C986.1 282.3 987.7 287.7 988.1 291.1C990 306.3 989.4 322.6 990.5 321.8C991.7 320.9 990.9 297.9 992.8 287.8C993.3 285.2 993.9 292.1 995.1 296.4C996.2 300.1 996.7 305.1 997.4 303.8C999 301.1 998.2 291.3 999.8 288.4C1000.5 287 1001.6 291.7 1002.1 295.3C1004 309.4 1003.4 325.5 1004.4 323.9C1005.7 321.8 1004.6 304.9 1006.8 288C1006.9 286.9 1009.1 287.8 1009.1 287.8L1009.1 383.5L338 383.5Z" fill="url(#g10)" stroke="none"/><path d="M338 284.1C338 284.1 338.4 277.8 340.3 273.2C340.7 272.2 342.2 272.1 342.7 273C344.6 276.9 343.8 282.7 345 282.9C346.1 283.1 345.5 277.6 347.3 273.7C347.8 272.8 349.2 272.4 349.7 273.3C351.5 276.5 350.8 281.8 352 281.9C353.1 282 352.5 277.2 354.3 273.7C354.8 272.8 356.2 272.2 356.6 273C358.5 276.6 357.8 282.4 359 282.5C360.1 282.7 359.5 277.5 361.3 273.6C361.8 272.6 363.2 271.8 363.6 272.7C365.6 277.1 364.7 283.8 366 284.1C367.1 284.4 366.4 278.3 368.3 273.9C368.7 272.9 370.2 272.4 370.6 273.3C372.5 277 371.7 282.8 373 283C374.1 283.2 373.5 277.9 375.3 274C375.8 272.9 377.1 272.2 377.6 273C379.4 275.8 378.8 281.3 379.9 281.3C381.1 281.3 380.4 276.3 382.3 273C382.8 272.1 384.2 272.1 384.6 273.1C386.5 277.1 385.7 282.8 386.9 283C388.1 283.2 387.4 277.6 389.3 273.8C389.7 272.8 391.1 272.6 391.6 273.5C393.5 277.3 392.8 283.3 393.9 283.1C395.1 282.9 394.4 276.4 396.3 272.7C396.7 271.8 398 272.8 398.6 273.9C400.3 277.1 399.8 281.4 400.9 281.2C402.1 281.1 401.4 276.3 403.2 273.4C403.8 272.6 405.1 272.8 405.6 273.8C407.4 277.5 406.7 282.7 407.9 282.8C409.1 282.8 408.4 277.7 410.2 273.8C410.7 272.7 412.1 271.9 412.6 272.8C414.4 276.3 413.7 282.3 414.9 282.6C416 282.9 415.4 277.7 417.2 273.9C417.7 272.9 419.1 272.1 419.6 273C421.4 276.3 420.7 282.4 421.9 282.3C423.1 282.3 422.3 276.7 424.2 272.8C424.7 271.9 426.1 271.8 426.5 272.7C428.4 276.7 427.7 282.5 428.9 282.6C430 282.8 429.3 277.3 431.2 273.4C431.7 272.4 433.1 271.9 433.5 272.9C435.5 277.5 434.7 284.4 435.9 284.4C437 284.5 436.3 277.3 438.2 273C438.6 272.1 440.1 272.9 440.5 274C442.4 278.3 441.7 283.7 442.9 283.7C444 283.6 443.3 278.2 445.2 273.8C445.7 272.7 447.1 271.9 447.5 272.8C449.4 276.4 448.5 282 449.9 282.8C450.8 283.4 450.4 277.9 452.2 275.5C452.8 274.7 453.8 275.6 454.5 276.5C456.2 279 455.7 282.4 456.8 282.3C458 282.2 457.4 278.2 459.2 276C459.8 275.3 460.9 275.6 461.5 276.5C463.2 279.1 462.7 283.1 463.8 283C465 282.9 464.4 278.5 466.2 276C466.7 275.2 467.4 276.2 468.5 276.5C469.7 276.8 469.8 276.7 470.8 277.4C472.2 278.3 472.2 280.2 473.2 279.8C474.5 279.3 474.6 275 475.5 275.6C477 276.8 476.3 282.2 477.8 283.5C478.6 284.2 479 281.6 480.1 279.7C481.3 277.8 481.6 275.2 482.5 275.9C483.9 276.9 483.4 282 484.8 282.9C485.7 283.5 485.6 280.2 487.1 278.9C487.9 278.2 488.8 278.1 489.5 278.9C491.1 280.9 490.8 285 491.8 284.5C493.1 283.9 492.3 279.9 494.1 276.8C494.7 275.9 495.3 276.3 496.5 276.4C497.6 276.5 497.6 277.3 498.8 277.2C500 277.2 499.9 276.5 501.1 276.1C502.2 275.8 503 275 503.4 275.9C505.3 279.5 504.6 285 505.8 285.2C506.9 285.3 506.5 278.2 508.1 276.4C508.8 275.5 509.2 278.2 510.4 279.9C511.5 281.4 511.9 283.3 512.8 282.7C514.2 281.8 513.4 279.2 515.1 276.8C515.7 275.9 516.9 275.4 517.4 276.3C519.3 279.6 518.6 285.3 519.8 285.2C520.9 285.1 520.2 279.3 522.1 275.9C522.6 275 523.8 275.6 524.4 276.5C526.2 279.2 525.6 283.3 526.7 283.2C527.9 283.1 527.3 279 529.1 276.2C529.6 275.3 530.9 275 531.4 275.8C533.2 278.4 532.3 282 533.7 283.1C534.6 283.7 534.8 281 536.1 279C537.1 277.4 537 276.6 538.4 276C539.3 275.6 539.5 277 540.7 277.1C541.9 277.2 541.9 276.5 543.1 276.4C544.2 276.3 544.8 275.9 545.4 276.7C547.1 279.1 546.6 283.1 547.7 282.8C549 282.5 548.3 278.1 550 275.5C550.6 274.7 551.8 275.1 552.4 276C554.1 278.4 553.3 281.2 554.7 282.1C555.6 282.6 555.8 280.4 557 278.8C558.1 277.4 558.5 275.4 559.4 276C560.9 277.1 560.5 282.1 561.7 282.1C562.9 282.1 562.6 276.8 564 276C565 275.5 565.4 277.7 566.4 279.6C567.7 282.3 567.6 285.3 568.7 285.3C569.9 285.1 569.5 281.9 571 279C571.9 277.3 572.7 275.1 573.4 276C575 278.3 574.5 285.2 575.7 285.3C576.8 285.3 576.4 280.7 578 276.4C578.7 274.5 579.1 273.3 580.3 273C581.4 272.8 581.5 274.2 582.7 275.4C583.8 276.6 583.7 277.7 585 277.9C586.1 278.1 586.6 277.4 587.3 276.3C589 273.6 588.3 270.7 589.7 270.1C590.6 269.7 591.1 275 592 274.3C593.5 273.1 593.1 266.6 594.3 266.3C595.4 266.1 595.3 272.6 596.7 273.2C597.6 273.7 598 268 599 268.4C600.3 268.8 599.9 274.1 601.3 274.8C602.3 275.2 602.2 271.3 603.6 270.7C604.6 270.3 605.3 273.5 606 272.7C607.7 270.6 607.5 264.9 608.3 264.9C609.8 267 609.1 276.8 610.6 279.2C611.4 280.4 611.2 274.8 613 272.2C613.5 271.4 614.6 271.6 615.3 272.4C616.9 274.1 616.2 274.9 617.6 277.1C618.5 278.4 618.6 278.8 620 279.2C621 279.5 621.4 279.2 622.3 278.4C623.8 277 623.1 275.8 624.6 274.9C625.5 274.3 625.9 275.8 626.9 275.5C628.2 275.2 628.1 274.6 629.3 273.7C630.4 272.9 630.4 272.9 631.6 272.1C632.7 271.4 632.9 270.5 633.9 270.7C635.2 271.1 635.1 272 636.3 273.3C637.4 274.6 637.6 274.5 638.6 275.8C639.9 277.6 639.6 279.1 640.9 279.5C641.9 279.7 641.9 278.1 643.3 277.1C644.3 276.5 644.4 276.4 645.6 276.3C646.7 276.1 646.8 276.9 647.9 276.7C649.2 276.4 649.2 276.2 650.2 275.3C651.6 274.2 651.3 273.9 652.6 272.7C653.6 271.7 653.7 271.2 654.9 271C656 270.8 656.1 271.5 657.2 271.9C658.4 272.2 658.5 271.9 659.6 272.5C660.8 273.1 661.1 273.1 661.9 274.2C663.4 276.3 662.7 277.9 664.2 279.1C665 279.6 665.3 278.2 666.6 277.7C667.7 277.1 667.9 277.5 668.9 276.8C670.3 275.7 669.9 274.6 671.2 274.1C672.2 273.8 672.4 275.3 673.5 275.2C674.8 275.1 674.9 274.7 675.9 273.8C677.2 272.6 676.9 272.3 678.2 271.1C679.2 270.2 679.5 269.4 680.5 269.6C681.9 270 681.7 271.1 682.9 272.5C684 273.7 684.3 273.5 685.2 274.9C686.6 277.1 686 278.5 687.5 279.7C688.3 280.2 688.6 278.8 689.9 278.3C691 277.9 691.2 278.3 692.2 277.7C693.5 277 693.2 276.4 694.5 275.7C695.5 275.3 695.7 275.6 696.9 275.5C698 275.4 698.1 275.7 699.2 275.5C700.4 275.3 700.4 275.1 701.5 274.7C702.7 274.2 702.6 274 703.8 273.7C705 273.4 705.1 273.8 706.2 273.4C707.4 273 707.3 272.1 708.5 272.1C709.7 272.1 709.9 272.5 710.8 273.4C712.2 274.8 712 275.1 713.2 276.8C714.3 278.3 714.1 279.1 715.5 279.8C716.4 280.3 717 279.9 717.8 279.1C719.3 277.7 718.7 276.9 720.2 275.5C721 274.6 721.3 274.8 722.5 274.5C723.6 274.3 723.7 274.8 724.8 274.5C726.1 274.1 726 273.9 727.1 273.2C728.3 272.5 728.4 272.5 729.5 271.7C730.7 270.9 730.9 269.5 731.8 269.9C733.2 270.5 732.8 271.9 734.1 273.7C735.1 274.9 735.5 274.6 736.5 275.8C737.9 277.8 737.3 279.3 738.8 280.1C739.7 280.6 740.2 279.5 741.1 278.5C742.5 277 742 276 743.5 275C744.3 274.5 744.9 275.9 745.8 275.4C747.2 274.5 746.9 273.8 748.1 272.4C749.2 271.2 749.5 269.7 750.4 270.1C751.8 270.7 751.2 272.9 752.8 274.4C753.5 275.1 754.3 273.7 755.1 274.3C756.7 275.7 755.9 277.5 757.4 278.4C758.3 278.9 758.7 278 759.8 277.2C761.1 276.2 760.8 275.4 762.1 274.9C763.1 274.6 763.6 276.2 764.4 275.6C766 274.5 765.3 272.4 766.8 271.4C767.6 270.9 767.9 272 769.1 272.7C770.3 273.3 770.5 273.1 771.4 274C772.8 275.2 772.4 275.7 773.7 277C774.7 277.9 775 278.7 776.1 278.5C777.4 278.2 777 276.8 778.4 276C779.4 275.4 779.6 275.9 780.7 275.6C781.9 275.3 781.9 275.3 783.1 274.9C784.3 274.4 784.5 274.7 785.4 273.9C786.8 272.8 786.3 271.8 787.7 271.1C788.6 270.6 788.9 271.1 790.1 271.5C791.3 271.9 791.6 271.6 792.4 272.6C793.9 274.3 794.1 277.8 794.7 276.7C796.4 274 795.9 264.9 797.1 264.9C798.3 265.2 797.5 273.4 799.4 277.7C799.8 278.8 800.4 276.4 801.7 275.7C802.7 275.1 802.9 275.4 804 275.1C805.2 274.8 805.5 275.1 806.4 274.4C807.8 273.3 807.4 271.7 808.7 271.4C809.8 271.2 810 272.4 811 273.5C812.3 274.8 812 275.1 813.4 276.4C814.4 277.3 814.6 277 815.7 277.8C816.9 278.7 816.9 279.8 818 279.6C819.3 279.5 819 278.2 820.4 277.3C821.3 276.6 821.7 277.2 822.7 276.5C824 275.7 824 275.6 825 274.4C826.3 272.9 826.1 271.3 827.3 271.2C828.5 271.1 828.3 273 829.7 274C830.6 274.7 831 274 832 274.6C833.3 275.3 833.1 275.7 834.3 276.6C835.4 277.3 835.6 278.1 836.7 277.8C838 277.5 837.7 276.5 839 275.4C840.1 274.5 840.1 274.5 841.3 273.8C842.4 273.3 842.5 273.5 843.7 273.1C844.8 272.7 845 271.8 846 272.1C847.3 272.5 846.9 273.7 848.3 274.5C849.3 275 849.7 274.1 850.6 274.6C852 275.4 851.6 276.1 853 277.1C854 277.9 854.1 277.9 855.3 278.1C856.4 278.3 856.6 278.3 857.6 277.9C858.9 277.3 858.8 277.1 860 276.2C861.2 275.3 861.2 275.3 862.3 274.2C863.5 273 863.5 271.7 864.6 271.7C865.8 271.7 865.7 273.1 867 274.2C868 275.1 868.2 274.9 869.3 275.7C870.5 276.5 870.3 277.3 871.6 277.6C872.7 277.8 872.8 277.1 873.9 276.6C875.1 276.1 875.1 276.1 876.3 275.6C877.4 275.1 877.6 275.4 878.6 274.7C880 273.7 879.6 273.2 880.9 272.2C882 271.4 882.2 270.8 883.3 271C884.5 271.2 884.4 272 885.6 273.1C886.8 274.2 886.8 274.2 887.9 275.4C889.2 276.7 888.8 277.3 890.3 278.2C891.2 278.7 891.5 278.6 892.6 278.3C893.8 278 893.7 277.6 894.9 276.9C896 276.3 896.3 276.7 897.2 275.8C898.7 274.5 898.1 273.6 899.6 272.5C900.4 271.9 900.9 272.1 901.9 272.4C903.2 272.9 903 273.6 904.2 274.1C905.3 274.5 905.7 273.7 906.6 274.3C908 275.3 907.5 276.3 908.9 277.4C909.8 278 910.2 278.2 911.2 277.9C912.6 277.4 912.3 276.8 913.6 275.8C914.7 274.9 914.7 274.9 915.9 274.1C917 273.4 917 273.1 918.2 272.7C919.3 272.4 919.4 272.7 920.6 272.9C921.7 273 921.8 272.9 922.9 273.3C924.1 273.7 924.3 273.6 925.2 274.6C926.6 276.1 926.1 277.5 927.5 278.1C928.5 278.5 928.7 277.4 929.9 276.6C931 275.8 930.9 275.4 932.2 275C933.3 274.7 933.4 275.5 934.5 275.3C935.7 275.2 935.8 275.1 936.9 274.4C938.2 273.5 937.9 272.5 939.2 272.1C940.2 271.8 940.6 272.3 941.5 273C942.9 274.2 942.5 274.7 943.9 276C944.8 276.9 944.9 277.1 946.2 277.3C947.3 277.5 947.3 277 948.5 277C949.7 276.9 949.8 276.8 950.8 277.2C952.1 277.6 952.3 279 953.2 278.6C954.6 277.9 954.2 276.7 955.5 274.9C956.6 273.5 957.1 271.6 957.8 272.2C959.4 273.6 958.9 278.6 960.2 278.9C961.2 279.2 960.8 275.6 962.5 273.4C963.2 272.5 964.3 271.9 964.8 272.7C966.6 275.4 966.1 280.7 967.2 280.3C968.4 280 967.9 273.1 969.5 271.4C970.2 270.5 970.6 273.3 971.8 275.1C973 276.9 973.3 279.3 974.1 278.6C975.7 277.4 974.8 273 976.5 271.3C977.2 270.5 977.9 272.2 978.8 273.6C980.2 275.6 979.9 277.8 981.1 277.9C982.2 278 981.9 275.3 983.5 274.1C984.3 273.4 985.2 273.3 985.8 274.1C987.5 276.3 987.1 280.6 988.1 280.1C989.5 279.5 988.6 275.1 990.5 272C991 271.1 992.1 271.3 992.8 272.1C994.5 274.1 994 277.5 995.1 277.5C996.3 277.5 996 273 997.4 272.1C998.3 271.6 998.7 273.3 999.8 274.7C1001.1 276.4 1001.1 278.6 1002.1 278.2C1003.4 277.8 1002.9 274.3 1004.4 273.1C1005.2 272.5 1005.5 274.4 1006.8 274.6C1007.9 274.8 1009.1 273.9 1009.1 273.9L1009.1 383.5L338 383.5Z" fill="url(#g11)" stroke="none"/><path d="M338 284.1C338 284.1 338.4 277.8 340.3 273.2C340.7 272.2 342.2 272.1 342.7 273C344.6 276.9 343.8 282.7 345 282.9C346.1 283.1 345.5 277.6 347.3 273.7C347.8 272.8 349.2 272.4 349.7 273.3C351.5 276.5 350.8 281.8 352 281.9C353.1 282 352.5 277.2 354.3 273.7C354.8 272.8 356.2 272.2 356.6 273C358.5 276.6 357.8 282.4 359 282.5C360.1 282.7 359.5 277.5 361.3 273.6C361.8 272.6 363.2 271.8 363.6 272.7C365.6 277.1 364.7 283.8 366 284.1C367.1 284.4 366.4 278.3 368.3 273.9C368.7 272.9 370.2 272.4 370.6 273.3C372.5 277 371.7 282.8 373 283C374.1 283.2 373.5 277.9 375.3 274C375.8 272.9 377.1 272.2 377.6 273C379.4 275.8 378.8 281.3 379.9 281.3C381.1 281.3 380.4 276.3 382.3 273C382.8 272.1 384.2 272.1 384.6 273.1C386.5 277.1 385.7 282.8 386.9 283C388.1 283.2 387.4 277.6 389.3 273.8C389.7 272.8 391.1 272.6 391.6 273.5C393.5 277.3 392.8 283.3 393.9 283.1C395.1 282.9 394.4 276.4 396.3 272.7C396.7 271.8 398 272.8 398.6 273.9C400.3 277.1 399.8 281.4 400.9 281.2C402.1 281.1 401.4 276.3 403.2 273.4C403.8 272.6 405.1 272.8 405.6 273.8C407.4 277.5 406.7 282.7 407.9 282.8C409.1 282.8 408.4 277.7 410.2 273.8C410.7 272.7 412.1 271.9 412.6 272.8C414.4 276.3 413.7 282.3 414.9 282.6C416 282.9 415.4 277.7 417.2 273.9C417.7 272.9 419.1 272.1 419.6 273C421.4 276.3 420.7 282.4 421.9 282.3C423.1 282.3 422.3 276.7 424.2 272.8C424.7 271.9 426.1 271.8 426.5 272.7C428.4 276.7 427.7 282.5 428.9 282.6C430 282.8 429.3 277.3 431.2 273.4C431.7 272.4 433.1 271.9 433.5 272.9C435.5 277.5 434.7 284.4 435.9 284.4C437 284.5 436.3 277.3 438.2 273C438.6 272.1 440.1 272.9 440.5 274C442.4 278.3 441.7 283.7 442.9 283.7C444 283.6 443.3 278.2 445.2 273.8C445.7 272.7 447.1 271.9 447.5 272.8C449.4 276.4 448.5 282 449.9 282.8C450.8 283.4 450.4 277.9 452.2 275.5C452.8 274.7 453.8 275.6 454.5 276.5C456.2 279 455.7 282.4 456.8 282.3C458 282.2 457.4 278.2 459.2 276C459.8 275.3 460.9 275.6 461.5 276.5C463.2 279.1 462.7 283.1 463.8 283C465 282.9 464.4 278.5 466.2 276C466.7 275.2 467.4 276.2 468.5 276.5C469.7 276.8 469.8 276.7 470.8 277.4C472.2 278.3 472.2 280.2 473.2 279.8C474.5 279.3 474.6 275 475.5 275.6C477 276.8 476.3 282.2 477.8 283.5C478.6 284.2 479 281.6 480.1 279.7C481.3 277.8 481.6 275.2 482.5 275.9C483.9 276.9 483.4 282 484.8 282.9C485.7 283.5 485.6 280.2 487.1 278.9C487.9 278.2 488.8 278.1 489.5 278.9C491.1 280.9 490.8 285 491.8 284.5C493.1 283.9 492.3 279.9 494.1 276.8C494.7 275.9 495.3 276.3 496.5 276.4C497.6 276.5 497.6 277.3 498.8 277.2C500 277.2 499.9 276.5 501.1 276.1C502.2 275.8 503 275 503.4 275.9C505.3 279.5 504.6 285 505.8 285.2C506.9 285.3 506.5 278.2 508.1 276.4C508.8 275.5 509.2 278.2 510.4 279.9C511.5 281.4 511.9 283.3 512.8 282.7C514.2 281.8 513.4 279.2 515.1 276.8C515.7 275.9 516.9 275.4 517.4 276.3C519.3 279.6 518.6 285.3 519.8 285.2C520.9 285.1 520.2 279.3 522.1 275.9C522.6 275 523.8 275.6 524.4 276.5C526.2 279.2 525.6 283.3 526.7 283.2C527.9 283.1 527.3 279 529.1 276.2C529.6 275.3 530.9 275 531.4 275.8C533.2 278.4 532.3 282 533.7 283.1C534.6 283.7 534.8 281 536.1 279C537.1 277.4 537 276.6 538.4 276C539.3 275.6 539.5 277 540.7 277.1C541.9 277.2 541.9 276.5 543.1 276.4C544.2 276.3 544.8 275.9 545.4 276.7C547.1 279.1 546.6 283.1 547.7 282.8C549 282.5 548.3 278.1 550 275.5C550.6 274.7 551.8 275.1 552.4 276C554.1 278.4 553.3 281.2 554.7 282.1C555.6 282.6 555.8 280.4 557 278.8C558.1 277.4 558.5 275.4 559.4 276C560.9 277.1 560.5 282.1 561.7 282.1C562.9 282.1 562.6 276.8 564 276C565 275.5 565.4 277.7 566.4 279.6C567.7 282.3 567.6 285.3 568.7 285.3C569.9 285.1 569.5 281.9 571 279C571.9 277.3 572.7 275.1 573.4 276C575 278.3 574.5 285.2 575.7 285.3C576.8 285.3 576.4 280.7 578 276.4C578.7 274.5 579.1 273.3 580.3 273C581.4 272.8 581.5 274.2 582.7 275.4C583.8 276.6 583.7 277.7 585 277.9C586.1 278.1 586.6 277.4 587.3 276.3C589 273.6 588.3 270.7 589.7 270.1C590.6 269.7 591.1 275 592 274.3C593.5 273.1 593.1 266.6 594.3 266.3C595.4 266.1 595.3 272.6 596.7 273.2C597.6 273.7 598 268 599 268.4C600.3 268.8 599.9 274.1 601.3 274.8C602.3 275.2 602.2 271.3 603.6 270.7C604.6 270.3 605.3 273.5 606 272.7C607.7 270.6 607.5 264.9 608.3 264.9C609.8 267 609.1 276.8 610.6 279.2C611.4 280.4 611.2 274.8 613 272.2C613.5 271.4 614.6 271.6 615.3 272.4C616.9 274.1 616.2 274.9 617.6 277.1C618.5 278.4 618.6 278.8 620 279.2C621 279.5 621.4 279.2 622.3 278.4C623.8 277 623.1 275.8 624.6 274.9C625.5 274.3 625.9 275.8 626.9 275.5C628.2 275.2 628.1 274.6 629.3 273.7C630.4 272.9 630.4 272.9 631.6 272.1C632.7 271.4 632.9 270.5 633.9 270.7C635.2 271.1 635.1 272 636.3 273.3C637.4 274.6 637.6 274.5 638.6 275.8C639.9 277.6 639.6 279.1 640.9 279.5C641.9 279.7 641.9 278.1 643.3 277.1C644.3 276.5 644.4 276.4 645.6 276.3C646.7 276.1 646.8 276.9 647.9 276.7C649.2 276.4 649.2 276.2 650.2 275.3C651.6 274.2 651.3 273.9 652.6 272.7C653.6 271.7 653.7 271.2 654.9 271C656 270.8 656.1 271.5 657.2 271.9C658.4 272.2 658.5 271.9 659.6 272.5C660.8 273.1 661.1 273.1 661.9 274.2C663.4 276.3 662.7 277.9 664.2 279.1C665 279.6 665.3 278.2 666.6 277.7C667.7 277.1 667.9 277.5 668.9 276.8C670.3 275.7 669.9 274.6 671.2 274.1C672.2 273.8 672.4 275.3 673.5 275.2C674.8 275.1 674.9 274.7 675.9 273.8C677.2 272.6 676.9 272.3 678.2 271.1C679.2 270.2 679.5 269.4 680.5 269.6C681.9 270 681.7 271.1 682.9 272.5C684 273.7 684.3 273.5 685.2 274.9C686.6 277.1 686 278.5 687.5 279.7C688.3 280.2 688.6 278.8 689.9 278.3C691 277.9 691.2 278.3 692.2 277.7C693.5 277 693.2 276.4 694.5 275.7C695.5 275.3 695.7 275.6 696.9 275.5C698 275.4 698.1 275.7 699.2 275.5C700.4 275.3 700.4 275.1 701.5 274.7C702.7 274.2 702.6 274 703.8 273.7C705 273.4 705.1 273.8 706.2 273.4C707.4 273 707.3 272.1 708.5 272.1C709.7 272.1 709.9 272.5 710.8 273.4C712.2 274.8 712 275.1 713.2 276.8C714.3 278.3 714.1 279.1 715.5 279.8C716.4 280.3 717 279.9 717.8 279.1C719.3 277.7 718.7 276.9 720.2 275.5C721 274.6 721.3 274.8 722.5 274.5C723.6 274.3 723.7 274.8 724.8 274.5C726.1 274.1 726 273.9 727.1 273.2C728.3 272.5 728.4 272.5 729.5 271.7C730.7 270.9 730.9 269.5 731.8 269.9C733.2 270.5 732.8 271.9 734.1 273.7C735.1 274.9 735.5 274.6 736.5 275.8C737.9 277.8 737.3 279.3 738.8 280.1C739.7 280.6 740.2 279.5 741.1 278.5C742.5 277 742 276 743.5 275C744.3 274.5 744.9 275.9 745.8 275.4C747.2 274.5 746.9 273.8 748.1 272.4C749.2 271.2 749.5 269.7 750.4 270.1C751.8 270.7 751.2 272.9 752.8 274.4C753.5 275.1 754.3 273.7 755.1 274.3C756.7 275.7 755.9 277.5 757.4 278.4C758.3 278.9 758.7 278 759.8 277.2C761.1 276.2 760.8 275.4 762.1 274.9C763.1 274.6 763.6 276.2 764.4 275.6C766 274.5 765.3 272.4 766.8 271.4C767.6 270.9 767.9 272 769.1 272.7C770.3 273.3 770.5 273.1 771.4 274C772.8 275.2 772.4 275.7 773.7 277C774.7 277.9 775 278.7 776.1 278.5C777.4 278.2 777 276.8 778.4 276C779.4 275.4 779.6 275.9 780.7 275.6C781.9 275.3 781.9 275.3 783.1 274.9C784.3 274.4 784.5 274.7 785.4 273.9C786.8 272.8 786.3 271.8 787.7 271.1C788.6 270.6 788.9 271.1 790.1 271.5C791.3 271.9 791.6 271.6 792.4 272.6C793.9 274.3 794.1 277.8 794.7 276.7C796.4 274 795.9 264.9 797.1 264.9C798.3 265.2 797.5 273.4 799.4 277.7C799.8 278.8 800.4 276.4 801.7 275.7C802.7 275.1 802.9 275.4 804 275.1C805.2 274.8 805.5 275.1 806.4 274.4C807.8 273.3 807.4 271.7 808.7 271.4C809.8 271.2 810 272.4 811 273.5C812.3 274.8 812 275.1 813.4 276.4C814.4 277.3 814.6 277 815.7 277.8C816.9 278.7 816.9 279.8 818 279.6C819.3 279.5 819 278.2 820.4 277.3C821.3 276.6 821.7 277.2 822.7 276.5C824 275.7 824 275.6 825 274.4C826.3 272.9 826.1 271.3 827.3 271.2C828.5 271.1 828.3 273 829.7 274C830.6 274.7 831 274 832 274.6C833.3 275.3 833.1 275.7 834.3 276.6C835.4 277.3 835.6 278.1 836.7 277.8C838 277.5 837.7 276.5 839 275.4C840.1 274.5 840.1 274.5 841.3 273.8C842.4 273.3 842.5 273.5 843.7 273.1C844.8 272.7 845 271.8 846 272.1C847.3 272.5 846.9 273.7 848.3 274.5C849.3 275 849.7 274.1 850.6 274.6C852 275.4 851.6 276.1 853 277.1C854 277.9 854.1 277.9 855.3 278.1C856.4 278.3 856.6 278.3 857.6 277.9C858.9 277.3 858.8 277.1 860 276.2C861.2 275.3 861.2 275.3 862.3 274.2C863.5 273 863.5 271.7 864.6 271.7C865.8 271.7 865.7 273.1 867 274.2C868 275.1 868.2 274.9 869.3 275.7C870.5 276.5 870.3 277.3 871.6 277.6C872.7 277.8 872.8 277.1 873.9 276.6C875.1 276.1 875.1 276.1 876.3 275.6C877.4 275.1 877.6 275.4 878.6 274.7C880 273.7 879.6 273.2 880.9 272.2C882 271.4 882.2 270.8 883.3 271C884.5 271.2 884.4 272 885.6 273.1C886.8 274.2 886.8 274.2 887.9 275.4C889.2 276.7 888.8 277.3 890.3 278.2C891.2 278.7 891.5 278.6 892.6 278.3C893.8 278 893.7 277.6 894.9 276.9C896 276.3 896.3 276.7 897.2 275.8C898.7 274.5 898.1 273.6 899.6 272.5C900.4 271.9 900.9 272.1 901.9 272.4C903.2 272.9 903 273.6 904.2 274.1C905.3 274.5 905.7 273.7 906.6 274.3C908 275.3 907.5 276.3 908.9 277.4C909.8 278 910.2 278.2 911.2 277.9C912.6 277.4 912.3 276.8 913.6 275.8C914.7 274.9 914.7 274.9 915.9 274.1C917 273.4 917 273.1 918.2 272.7C919.3 272.4 919.4 272.7 920.6 272.9C921.7 273 921.8 272.9 922.9 273.3C924.1 273.7 924.3 273.6 925.2 274.6C926.6 276.1 926.1 277.5 927.5 278.1C928.5 278.5 928.7 277.4 929.9 276.6C931 275.8 930.9 275.4 932.2 275C933.3 274.7 933.4 275.5 934.5 275.3C935.7 275.2 935.8 275.1 936.9 274.4C938.2 273.5 937.9 272.5 939.2 272.1C940.2 271.8 940.6 272.3 941.5 273C942.9 274.2 942.5 274.7 943.9 276C944.8 276.9 944.9 277.1 946.2 277.3C947.3 277.5 947.3 277 948.5 277C949.7 276.9 949.8 276.8 950.8 277.2C952.1 277.6 952.3 279 953.2 278.6C954.6 277.9 954.2 276.7 955.5 274.9C956.6 273.5 957.1 271.6 957.8 272.2C959.4 273.6 958.9 278.6 960.2 278.9C961.2 279.2 960.8 275.6 962.5 273.4C963.2 272.5 964.3 271.9 964.8 272.7C966.6 275.4 966.1 280.7 967.2 280.3C968.4 280 967.9 273.1 969.5 271.4C970.2 270.5 970.6 273.3 971.8 275.1C973 276.9 973.3 279.3 974.1 278.6C975.7 277.4 974.8 273 976.5 271.3C977.2 270.5 977.9 272.2 978.8 273.6C980.2 275.6 979.9 277.8 981.1 277.9C982.2 278 981.9 275.3 983.5 274.1C984.3 273.4 985.2 273.3 985.8 274.1C987.5 276.3 987.1 280.6 988.1 280.1C989.5 279.5 988.6 275.1 990.5 272C991 271.1 992.1 271.3 992.8 272.1C994.5 274.1 994 277.5 995.1 277.5C996.3 277.5 996 273 997.4 272.1C998.3 271.6 998.7 273.3 999.8 274.7C1001.1 276.4 1001.1 278.6 1002.1 278.2C1003.4 277.8 1002.9 274.3 1004.4 273.1C1005.2 272.5 1005.5 274.4 1006.8 274.6C1007.9 274.8 1009.1 273.9 1009.1 273.9" fill="none" stroke="#5fd3d6" stroke-width="2" stroke-linejoin="round"/><path d="M338 288.3C338 288.3 339.2 315.5 340.3 314.7C341.6 313.9 340.7 296 342.7 285.2C343 283.4 344.3 287.2 345 289.5C346.6 294.8 346.3 300.9 347.3 300.4C348.6 299.8 347.9 290.7 349.7 287.3C350.2 286.1 351.1 289.1 352 291.2C353.4 294.6 353.5 299.3 354.3 298.2C355.8 296.2 355.2 286.9 356.6 285C357.5 284 358.4 288.6 359 292.4C360.7 303.8 360.3 316.8 361.3 315.4C362.6 313.8 361.5 299.2 363.6 286.4C363.8 285.3 365.8 286.3 366 287.6C368.1 305.8 367.1 325.6 368.3 325.3C369.5 325.1 368.6 301.3 370.6 286.5C370.9 284.4 372.6 288.8 373 291.5C375 309.2 374.2 328.4 375.3 327.3C376.5 326.1 375.4 305.9 377.6 286.9C377.7 285.8 379.8 286 379.9 287.1C382.1 304.6 381.1 324.2 382.3 324.2C383.4 324.2 382.4 304.4 384.6 287.1C384.7 286 386.8 286.4 386.9 287.5C389.1 303.5 388.1 321.7 389.3 321.4C390.4 321.1 389.5 300.3 391.6 286.4C391.9 284.7 393.6 288.1 393.9 290.2C395.9 302.9 395.2 317.1 396.3 316C397.5 314.7 396.6 296.9 398.6 285.5C398.9 283.7 400.5 287.3 400.9 289.6C402.8 300.1 402.2 311.9 403.2 311C404.5 310 403.5 295.5 405.6 285.8C405.9 284.3 407.3 287 407.9 288.8C409.7 294.3 409.2 301 410.2 300.5C411.5 299.8 410.8 290.1 412.6 286.5C413.2 285.3 414 288.5 414.9 290.7C416.4 294.7 416.3 299.7 417.2 298.8C418.6 297.6 417.7 290.6 419.6 286.4C420 285.4 421.7 286.9 421.9 288.4C424 306.6 423.1 326.6 424.2 325.7C425.4 324.8 424.4 302.6 426.5 284.8C426.7 283.3 428.4 285.6 428.9 287.1C430.8 293.6 430 300.8 431.2 300.8C432.4 300.8 431.6 292.6 433.5 287C433.9 286 435.6 286.5 435.9 287.6C438 298.2 437.1 310.6 438.2 310.4C439.4 310.2 438.5 295.5 440.5 286.7C440.9 285.3 442.2 288.2 442.9 290C444.6 295 444.3 301.6 445.2 300.5C446.6 298.9 445.9 288 447.5 284.7C448.2 283.3 449.5 287.7 449.9 291.1C451.8 309.9 451.1 329.2 452.2 329.2C453.4 327.6 452.4 302.7 454.5 285.2C454.8 283.1 456 287.5 456.8 290C458.4 294.8 458.1 300.4 459.2 299.8C460.5 299.1 459.9 290 461.5 287.4C462.2 286.3 463.5 289.8 463.8 292.5C465.8 308.1 465.1 325.9 466.2 324.1C467.5 322 466.5 298.2 468.5 284.8C468.9 282.3 470.2 288.3 470.8 292.1C472.6 303.5 472.1 316.4 473.2 315.3C474.4 313.9 473.4 298.6 475.5 287.1C475.7 285.7 477.3 288 477.8 289.6C479.6 294.6 479.1 300.9 480.1 300.4C481.4 299.7 480.5 292.6 482.5 287.3C482.8 286.4 484.6 286.7 484.8 287.8C487 300.9 486 316.4 487.1 315.8C488.3 315.2 487.5 296 489.5 285.5C489.8 283.5 490.8 288 491.8 290.7C493.2 294.5 493.2 299.5 494.1 298.5C495.5 297.1 494.7 289.7 496.5 285.9C497 284.8 498.6 287.1 498.8 288.9C500.9 307.4 500 327.3 501.1 326.6C502.3 325.8 501.2 304.8 503.4 285.9C503.6 284.8 505.6 285.4 505.8 286.6C508 306.7 507 328.8 508.1 328.4C509.3 328.1 508.3 303.2 510.4 285.2C510.6 283.4 512.4 286.7 512.8 288.8C514.7 300.4 514 313.1 515.1 312.6C516.3 312.1 515.5 295.9 517.4 286.8C517.8 285.1 519.5 288.7 519.8 291.1C521.8 308 521 326.5 522.1 325.3C523.3 324 522.4 300.4 524.4 286.1C524.7 283.8 526.3 288.9 526.7 292.1C528.7 306.6 528 322.9 529.1 321.4C530.4 319.5 529.3 300.3 531.4 285.3C531.6 283.8 533.5 286.5 533.7 288.3C535.9 306.7 535 326.8 536.1 325.9C537.3 325 536.4 300 538.4 284.8C538.7 282.4 539.8 287.7 540.7 290.7C542.1 295.2 542.2 300.9 543.1 299.8C544.5 297.9 543.8 287.4 545.4 284.8C546.2 283.5 546.6 288.4 547.7 292C549 296.2 549.1 301.5 550 300.5C551.5 298.9 550.7 290.2 552.4 286.7C553 285.5 554.4 288.6 554.7 291.1C556.8 309.1 555.9 328.7 557 327.6C558.3 326.4 557.3 303.5 559.4 286.4C559.6 284.7 561 288 561.7 289.9C563.4 294.9 563.1 301.4 564 300.3C565.4 298.8 564.4 290.4 566.4 284.8C566.7 283.7 568.5 285.3 568.7 286.8C570.8 300.9 569.9 316 571 316C572.2 316 571.4 296.8 573.4 286.8C573.7 284.8 575.3 289.2 575.7 292.1C577.7 308.9 576.9 327.3 578 326.1C579.3 324.7 578.2 306 580.3 286.9C580.5 285.4 582.4 283.4 582.7 284.7C584.7 294.7 583.1 297.3 585 309.4C585.4 311.9 586.3 311.7 587.3 314.1C588.6 316.9 589.3 322.1 589.7 319.9C591.6 307.5 589.8 301 592 285C592.1 283.9 594.1 284.5 594.3 285.6C596.4 296.6 594.6 297.7 596.7 309.2C597 311.1 598 310.6 599 312.3C600.3 314.6 600 314.9 601.3 317.2C602.3 318.9 602.9 321 603.6 320.3C605.2 318.8 605.5 316.7 606 312.8C607.8 297.6 607 283.4 608.3 282.3C609.4 282.3 609 295.4 610.6 308.4C611.4 314.3 612.3 322.9 613 320.1C614.7 312.6 613.1 303.1 615.3 287.8C615.5 286.7 617.4 286.3 617.6 287.4C619.7 297.4 617.9 299.2 620 310C620.2 311.4 621.1 310.8 622.3 311.7C623.5 312.6 623.4 312.8 624.6 313.6C625.7 314.3 625.9 314 626.9 314.7C628.3 315.7 627.9 316.2 629.3 317C630.3 317.6 630.6 316.8 631.6 317.3C632.9 318 633.7 320.6 633.9 319.3C636.1 306.7 634.1 303.9 636.3 289.4C636.5 288 638.3 286.3 638.6 287.6C640.7 296.9 638.8 299.7 640.9 310.6C641.2 311.9 642 311.7 643.3 312C644.3 312.3 644.5 311.5 645.6 311.9C646.9 312.3 646.8 312.6 647.9 313.5C649.2 314.5 648.9 314.8 650.2 315.8C651.3 316.5 651.5 316.2 652.6 316.8C653.8 317.6 653.8 317.7 654.9 318.6C656.1 319.6 657 321.9 657.2 320.6C659.4 307.3 657.4 303.5 659.6 289.4C659.7 288.3 661.6 289 661.9 290.1C664 299 662.2 300.1 664.2 309.3C664.6 310.8 665.3 310.6 666.6 311.5C667.6 312.4 667.6 312.5 668.9 312.9C670 313.2 670.1 312.7 671.2 313C672.4 313.3 672.5 313.4 673.5 314.1C674.9 315.1 674.6 315.4 675.9 316.5C676.9 317.3 677.1 317 678.2 317.7C679.4 318.5 680.4 320.8 680.5 319.5C682.7 304 680.7 300.8 682.9 284.1C683 283 685 282.9 685.2 284C687.3 295.2 685.4 296.8 687.5 308.6C687.8 310 688.6 309.9 689.9 310.4C690.9 310.7 691.4 309.6 692.2 310.2C693.7 311.3 693 312.6 694.5 313.7C695.4 314.3 695.8 313.3 696.9 313.6C698.1 314 698.1 314.3 699.2 315.1C700.4 316 700.2 316.6 701.5 317C702.5 317.3 702.8 316.1 703.8 316.5C705.2 316.9 704.8 318 706.2 318.6C707.2 319.1 708.3 319.8 708.5 318.7C710.7 303.9 708.7 301.7 710.8 286.9C711 285.8 713 286 713.2 287C715.3 297.6 713.4 299.1 715.5 310.1C715.8 311.4 716.5 311.4 717.8 311.8C718.9 312.1 719.2 311 720.2 311.5C721.6 312.3 721.1 313.2 722.5 314.3C723.4 315.1 723.6 315 724.8 315.4C725.9 315.7 726.1 315.2 727.1 315.7C728.4 316.3 728.5 316.4 729.5 317.5C730.9 319 731.5 322.7 731.8 321C733.9 308.5 732 304.4 734.1 289.2C734.3 288 736.2 287.3 736.5 288.3C738.5 297 736.9 298.8 738.8 308.7C739.2 310.7 739.7 310.7 741.1 312.1C742 312.9 742.5 312.3 743.5 313C744.8 314.1 744.4 314.6 745.8 315.7C746.8 316.4 747.3 315.7 748.1 316.5C749.6 318 750.2 321.9 750.4 320.2C752.5 307.3 750.6 303.3 752.8 287.4C753 285.9 754.9 284.2 755.1 285.5C757.2 295.7 755.3 298.8 757.4 310.4C757.6 311.5 758.9 310.2 759.8 311C761.3 312.3 760.7 313.1 762.1 314.5C763 315.3 763.3 315 764.4 315.6C765.6 316.1 765.8 315.7 766.8 316.5C768.2 317.8 768.8 321.2 769.1 319.6C771.2 306.4 769.3 302.8 771.4 286.9C771.6 285.4 773.5 283.6 773.7 284.9C775.8 294.4 774 297.1 776.1 308.6C776.4 310.2 777.3 309.8 778.4 311C779.6 312.2 779.4 312.5 780.7 313.5C781.7 314.3 782 313.9 783.1 314.5C784.3 315.2 784.4 315.1 785.4 316.1C786.8 317.5 786.3 317.9 787.7 319.3C788.7 320.2 789 320.9 790.1 320.7C791.3 320.4 792.2 319.9 792.4 318.3C794.5 303.1 792.7 302.4 794.7 287.1C795 285.1 796.7 282.3 797.1 283.6C799 292.7 797.4 296.3 799.4 308.2C799.7 310 800.5 309.7 801.7 311.1C802.8 312.5 803.1 312.3 804 313.8C805.4 315.8 805 316.1 806.4 318.1C807.3 319.4 808.5 321.7 808.7 320.3C810.8 305.8 809.1 298.3 811 286.2C811.4 284 811.9 290.9 813.4 291.9C814.2 292.4 814.4 290.4 815.7 289.3C816.7 288.4 817.8 286.7 818 287.8C820.1 296.5 818.5 298.5 820.4 308.9C820.8 311.6 821.2 311.6 822.7 313.8C823.5 315 824.2 314.5 825 315.7C826.6 318.1 827 323.1 827.3 321C829.3 309.3 827.6 301.3 829.7 288C829.9 286.4 831 291.6 832 291.3C833.3 290.9 833.9 285 834.3 286.6C836.2 293.5 834.6 298 836.7 308.4C837 310 838 309.4 839 310.6C840.3 312.2 840.2 312.3 841.3 314C842.5 315.7 842.5 315.6 843.7 317.3C844.9 319.1 845.7 322.7 846 321C848.1 307.2 846.2 301.2 848.3 286.3C848.5 284.9 849.4 288.2 850.6 288.5C851.7 288.7 851.7 287.5 853 287.1C854.1 286.8 855.1 286.1 855.3 287.1C857.4 297.4 855.6 298.8 857.6 309.9C858 311.7 858.7 311.4 860 312.8C861.1 314 861.5 313.7 862.3 315.1C863.8 317.7 864.3 322.9 864.6 320.8C866.6 308.5 864.9 300.3 867 286.1C867.2 284.5 867.9 288.8 869.3 289.3C870.3 289.6 871.3 286.6 871.6 287.7C873.7 296.4 872.1 298.5 873.9 308.8C874.4 311.2 874.7 311.5 876.3 313.1C877 313.9 877.9 312.8 878.6 313.6C880.2 315.3 879.5 316.1 880.9 318.2C881.8 319.5 883.1 321.9 883.3 320.5C885.4 306.9 883.4 302.9 885.6 288.2C885.8 287.1 887.1 289.4 887.9 288.9C889.4 288 889.9 284 890.3 285.5C892.2 294.2 890.6 297.7 892.6 309.3C892.9 311.3 893.4 311.4 894.9 312.7C895.8 313.4 896.4 312.5 897.2 313.2C898.7 314.3 898.3 314.9 899.6 316.3C900.6 317.5 901.7 319.7 901.9 318.4C904 304.8 902.2 299.2 904.2 286.5C904.5 284.9 905.1 289 906.6 289.8C907.5 290.3 908.7 287.9 908.9 289C911 298.2 909.1 300.5 911.2 310.3C911.5 311.4 912.8 310 913.6 310.8C915.1 312.4 914.4 313.2 915.9 315.1C916.7 316.1 917.4 315.5 918.2 316.6C919.7 318.4 920.3 322.7 920.6 320.9C922.6 308.1 920.7 302.5 922.9 287.3C923 286.2 924.2 288.4 925.2 288.1C926.6 287.6 927.3 284.4 927.5 285.7C929.6 294.9 927.9 297.7 929.9 309.1C930.2 311.2 930.7 311.2 932.2 312.7C933.1 313.6 933.7 312.8 934.5 313.8C936.1 315.6 935.5 316.1 936.9 318.2C937.8 319.5 939 321.9 939.2 320.5C941.3 306.7 939.5 300 941.5 287.8C941.8 285.9 942.8 292.5 943.9 292.2C945.1 292 945.7 285.1 946.2 286.8C948 293 946.6 297.7 948.5 308.1C948.9 310.2 950.5 313.4 950.8 311.8C952.8 304.3 952 290.5 953.2 290C954.3 289.6 954.4 310.4 955.5 310C956.7 309.5 956.1 293.5 957.8 288.3C958.5 286.4 959.6 291.9 960.2 295.8C962 308.7 961.5 324 962.5 321.8C963.9 318.6 962.8 298.7 964.8 284.9C965.1 282.8 966.8 287.2 967.2 289.9C969.2 306.7 968.4 324.5 969.5 323.9C970.7 323.1 969.7 302.9 971.8 287C972 285.6 973.9 287.7 974.1 289.3C976.3 305.1 975.4 322.8 976.5 321.8C977.7 320.6 977 295.5 978.8 284.7C979.3 282.3 980.5 289.5 981.1 294.4C982.9 309.1 982.5 326 983.5 323.9C984.8 321.1 983.8 298.5 985.8 284.6C986.1 282.3 987.7 287.7 988.1 291.1C990 306.3 989.4 322.6 990.5 321.8C991.7 320.9 990.9 297.9 992.8 287.8C993.3 285.2 993.9 292.1 995.1 296.4C996.2 300.1 996.7 305.1 997.4 303.8C999 301.1 998.2 291.3 999.8 288.4C1000.5 287 1001.6 291.7 1002.1 295.3C1004 309.4 1003.4 325.5 1004.4 323.9C1005.7 321.8 1004.6 304.9 1006.8 288C1006.9 286.9 1009.1 287.8 1009.1 287.8" fill="none" stroke="#b8a0e0" stroke-width="2" stroke-linejoin="round"/><path d="M338 383.5H1010" stroke="#2f4473" stroke-width="1" fill="none"/><path d="M338.5 383V388.5" stroke="#2f4473" stroke-width="1" fill="none"/><path d="M492.5 383V388.5" stroke="#2f4473" stroke-width="1" fill="none"/><path d="M646.5 383V388.5" stroke="#2f4473" stroke-width="1" fill="none"/><path d="M799.5 383V388.5" stroke="#2f4473" stroke-width="1" fill="none"/><path d="M953.5 383V388.5" stroke="#2f4473" stroke-width="1" fill="none"/><path d="M1009.5 383V388.5" stroke="#2f4473" stroke-width="1" fill="none"/><text x="329.5" y="387.1" font-size="12" fill="#333" text-anchor="end">0</text><text x="329.5" y="366.3" font-size="12" fill="#333" text-anchor="end">3</text><text x="329.5" y="345.5" font-size="12" fill="#333" text-anchor="end">6</text><text x="329.5" y="324.7" font-size="12" fill="#333" text-anchor="end">9</text><text x="329.5" y="303.9" font-size="12" fill="#333" text-anchor="end">12</text><text x="329.5" y="283.1" font-size="12" fill="#333" text-anchor="end">15</text><text x="329.5" y="268.1" font-size="12" fill="#333" text-anchor="end">17.16</text><text x="339" y="401" font-size="12" fill="#333" text-anchor="middle" textLength="118" lengthAdjust="spacingAndGlyphs">2025-09-24 00:00:00</text><text x="492.8" y="401" font-size="12" fill="#333" text-anchor="middle" textLength="118" lengthAdjust="spacingAndGlyphs">2025-09-24 05:30:00</text><text x="646.6" y="401" font-size="12" fill="#333" text-anchor="middle" textLength="118" lengthAdjust="spacingAndGlyphs">2025-09-24 11:00:00</text><text x="800.4" y="401" font-size="12" fill="#333" text-anchor="middle" textLength="118" lengthAdjust="spacingAndGlyphs">2025-09-24 16:30:00</text><text x="1010.1" y="401" font-size="12" fill="#333" text-anchor="middle" textLength="118" lengthAdjust="spacingAndGlyphs">2025-09-24 23:55:00</text><text x="337.5" y="246.5" font-size="12" fill="#546b91" text-anchor="middle">℃</text><circle cx="823.3" cy="250.2" r="6" fill="#b7a3df"/><text x="834" y="253.8" font-size="12" fill="#333">冷冻水出水温度</text><circle cx="934" cy="250.2" r="6" fill="#96e1e4"/><text x="945" y="253.8" font-size="12" fill="#333">冷冻水回水温度</text></svg></div>
<div class="card" style="left:1079px;top:168px;width:830px;height:250px"><div class="bar" style="left:20px;top:21px"></div><div class="ct" style="left:37px;top:18px">制冷量预测</div><div class="abs" style="left:727px;top:20px;width:75px;height:32px;background:#00a9a3;border-radius:2px;color:#fff;font-size:14px;line-height:32px;white-space:nowrap">
<svg class="abs" style="left:14.5px;top:9.5px" width="14" height="14" viewBox="0 0 14 14"><path d="M4.2 8.8 L8.6 4.4 a1.3 1.3 0 0 1 1.9 1.9 L5.6 11.2 a2.4 2.4 0 0 1 -3.4 -3.4 L7.4 2.6" fill="none" stroke="#fff" stroke-width="1.2" stroke-linecap="round" transform="rotate(-4 7 7)"/></svg>
<span class="abs" style="left:34px;top:.7px">导出</span></div><svg class="abs" style="left:20px;top:40px;overflow:hidden" width="790" height="210" viewBox="1099 208 790 210"><defs><linearGradient id="g2a" x1="0" y1="0" x2="0" y2="1"><stop offset="0" stop-color="#5fd3d6" stop-opacity="0.45"/><stop offset="1" stop-color="#5fd3d6" stop-opacity="0.0"/></linearGradient></defs><path d="M1184.4 364.5H1849.3" stroke="#e4e4e7" stroke-width="1" stroke-dasharray="4 3" fill="none"/><path d="M1184.4 341.5H1849.3" stroke="#e4e4e7" stroke-width="1" stroke-dasharray="4 3" fill="none"/><path d="M1184.4 318.5H1849.3" stroke="#e4e4e7" stroke-width="1" stroke-dasharray="4 3" fill="none"/><path d="M1184.4 295.5H1849.3" stroke="#e4e4e7" stroke-width="1" stroke-dasharray="4 3" fill="none"/><path d="M1184.4 273.5H1849.3" stroke="#e4e4e7" stroke-width="1" stroke-dasharray="4 3" fill="none"/><path d="M1184.4 268.5H1849.3" stroke="#e4e4e7" stroke-width="1" stroke-dasharray="4 3" fill="none"/><path d="M1184.5 268.4V387.2" stroke="#e4e4e7" stroke-width="1" stroke-dasharray="4 3" fill="none"/><path d="M1351.5 268.4V387.2" stroke="#e4e4e7" stroke-width="1" stroke-dasharray="4 3" fill="none"/><path d="M1517.5 268.4V387.2" stroke="#e4e4e7" stroke-width="1" stroke-dasharray="4 3" fill="none"/><path d="M1683.5 268.4V387.2" stroke="#e4e4e7" stroke-width="1" stroke-dasharray="4 3" fill="none"/><path d="M1822.5 268.4V387.2" stroke="#e4e4e7" stroke-width="1" stroke-dasharray="4 3" fill="none"/><path d="M1849.5 268.4V387.2" stroke="#e4e4e7" stroke-width="1" stroke-dasharray="4 3" fill="none"/><path d="M1198.3 342.5C1198.3 342.5 1212.2 341.1 1226 338.4C1239.9 335.6 1240 335.6 1253.7 331.5C1267.7 327.4 1267.3 325.8 1281.4 321.9C1295 318.2 1295.6 320.5 1309.1 316.5C1323.3 312.2 1322.5 309.3 1336.8 305.5C1350.2 302 1350.6 303.7 1364.5 301.9C1378.3 300 1378.7 301.5 1392.2 298.2C1406.4 294.7 1405.8 292.6 1419.9 288.2C1433.5 283.9 1433.5 283.4 1447.6 280.9C1461.2 278.4 1461.6 280.5 1475.3 278.1C1489.3 275.7 1489 273.7 1503 271.3C1516.7 268.9 1516.8 268.9 1530.7 268.5C1544.5 268.5 1544.7 268.5 1558.4 269.9C1572.4 271.6 1572.1 273.4 1586.1 275.4C1599.9 277.3 1600 276.6 1613.8 277.7C1627.7 278.7 1627.8 277.7 1641.5 279.5C1655.5 281.3 1655.5 281.7 1669.2 285C1683.2 288.3 1682.9 289.8 1696.9 292.7C1710.6 295.5 1710.8 296.6 1724.6 296.4C1738.5 296.1 1738.4 293.3 1752.3 291.8C1766.1 290.3 1766.2 290.8 1780 290.4C1793.9 290.1 1794.2 292.3 1807.7 290.4C1821.9 288.5 1835.4 282.7 1835.4 282.7" fill="none" stroke="#e3f8fc" stroke-width="7.5" stroke-linecap="butt" stroke-linejoin="round"/><path d="M1198.3 328.3C1198.3 328.3 1212.1 330.5 1226 332.4C1239.8 334.4 1239.8 336.1 1253.7 336.1C1267.5 335.9 1267.6 334.1 1281.4 331.5C1295.3 328.9 1295.4 325 1309.1 325.6C1323.1 326.2 1322.7 332.3 1336.8 333.8C1350.4 335.3 1350.7 333.3 1364.5 331.5C1378.4 329.7 1378.6 325.4 1392.2 326.5C1406.3 327.7 1407.4 336.1 1419.9 336.1C1435.1 332.6 1432.1 318.8 1447.6 313.7C1459.8 309.7 1461.5 318.3 1475.3 317.8C1489.2 317.4 1489 313.6 1503 311.9C1516.7 310.2 1516.9 311.9 1530.7 311C1544.6 310.1 1544.5 308.9 1558.4 308.2C1572.2 308.2 1572.4 308.2 1586.1 308.2C1600.1 309.9 1600 314.6 1613.8 314.6C1627.7 314.6 1628.2 308.2 1641.5 308.2C1655.9 310 1654.9 320.1 1669.2 321.5C1682.6 322.8 1682.9 316.6 1696.9 313.7C1710.6 310.9 1710.9 309.3 1724.6 310.1C1738.6 310.9 1738.5 316.8 1752.3 316.9C1766.2 317 1766.7 308.9 1780 310.5C1794.4 312.3 1793.4 318.3 1807.7 323.8C1821.1 328.8 1835.4 331.5 1835.4 331.5L1835.4 387.2L1198.3 387.2Z" fill="url(#g2a)"/><path d="M1198.3 328.3C1198.3 328.3 1212.1 330.5 1226 332.4C1239.8 334.4 1239.8 336.1 1253.7 336.1C1267.5 335.9 1267.6 334.1 1281.4 331.5C1295.3 328.9 1295.4 325 1309.1 325.6C1323.1 326.2 1322.7 332.3 1336.8 333.8C1350.4 335.3 1350.7 333.3 1364.5 331.5C1378.4 329.7 1378.6 325.4 1392.2 326.5C1406.3 327.7 1407.4 336.1 1419.9 336.1C1435.1 332.6 1432.1 318.8 1447.6 313.7C1459.8 309.7 1461.5 318.3 1475.3 317.8C1489.2 317.4 1489 313.6 1503 311.9C1516.7 310.2 1516.9 311.9 1530.7 311C1544.6 310.1 1544.5 308.9 1558.4 308.2C1572.2 308.2 1572.4 308.2 1586.1 308.2C1600.1 309.9 1600 314.6 1613.8 314.6C1627.7 314.6 1628.2 308.2 1641.5 308.2C1655.9 310 1654.9 320.1 1669.2 321.5C1682.6 322.8 1682.9 316.6 1696.9 313.7C1710.6 310.9 1710.9 309.3 1724.6 310.1C1738.6 310.9 1738.5 316.8 1752.3 316.9C1766.2 317 1766.7 308.9 1780 310.5C1794.4 312.3 1793.4 318.3 1807.7 323.8C1821.1 328.8 1835.4 331.5 1835.4 331.5" fill="none" stroke="#5fd3d6" stroke-width="2.6"/><path d="M1184 387.5H1850" stroke="#2f4473" stroke-width="1" fill="none"/><path d="M1184.5 387V392.5" stroke="#2f4473" stroke-width="1" fill="none"/><path d="M1351.5 387V392.5" stroke="#2f4473" stroke-width="1" fill="none"/><path d="M1517.5 387V392.5" stroke="#2f4473" stroke-width="1" fill="none"/><path d="M1683.5 387V392.5" stroke="#2f4473" stroke-width="1" fill="none"/><path d="M1822.5 387V392.5" stroke="#2f4473" stroke-width="1" fill="none"/><path d="M1849.5 387V392.5" stroke="#2f4473" stroke-width="1" fill="none"/><text x="1176.5" y="390.8" font-size="12" fill="#333" text-anchor="end">0</text><text x="1176.5" y="368" font-size="12" fill="#333" text-anchor="end">50</text><text x="1176.5" y="345.2" font-size="12" fill="#333" text-anchor="end">100</text><text x="1176.5" y="322.3" font-size="12" fill="#333" text-anchor="end">150</text><text x="1176.5" y="299.5" font-size="12" fill="#333" text-anchor="end">200</text><text x="1176.5" y="276.7" font-size="12" fill="#333" text-anchor="end">250</text><text x="1199.3" y="405" font-size="12" fill="#333" text-anchor="middle" textLength="118" lengthAdjust="spacingAndGlyphs">2025-09-24 00:00:00</text><text x="1365.5" y="405" font-size="12" fill="#333" text-anchor="middle" textLength="118" lengthAdjust="spacingAndGlyphs">2025-09-24 06:00:00</text><text x="1531.7" y="405" font-size="12" fill="#333" text-anchor="middle" textLength="118" lengthAdjust="spacingAndGlyphs">2025-09-24 12:00:00</text><text x="1697.9" y="405" font-size="12" fill="#333" text-anchor="middle" textLength="118" lengthAdjust="spacingAndGlyphs">2025-09-24 18:00:00</text><text x="1836.4" y="405" font-size="12" fill="#333" text-anchor="middle" textLength="118" lengthAdjust="spacingAndGlyphs">2025-09-24 23:00:00</text><text x="1187.9" y="250.5" font-size="12" fill="#546b91" text-anchor="middle" textLength="18.6" lengthAdjust="spacingAndGlyphs">kW</text><circle cx="1734.8" cy="254.3" r="6" fill="#e0f8fb"/><text x="1746" y="257.9" font-size="12" fill="#333">预测轨迹</text><circle cx="1809.8" cy="254.3" r="6" fill="#96e1e4"/><text x="1821" y="257.9" font-size="12" fill="#333">实际轨迹</text></svg></div>
<div class="card" style="left:239px;top:428px;width:830px;height:250px"><div class="bar" style="left:20px;top:21px"></div><div class="ct" style="left:37px;top:18px">单机能效分析</div><div class="th" style="top:56px"><span style="left:0">设备组合</span><span style="left:263px">COP(kW/kW)</span><span style="left:527px">制冷量(kW)</span></div><div class="row" style="top:100.5px"><span style="left:0">1#</span><span style="left:263px">5.91</span><span style="left:527px">2460</span></div><div class="row" style="top:145.5px"><span style="left:0">2#</span><span style="left:263px">5.39</span><span style="left:527px">2460</span></div><div class="row" style="top:190.5px"><span style="left:0">1#、2#</span><span style="left:263px">5.65</span><span style="left:527px">4920</span></div></div>
<div class="card" style="left:1079px;top:428px;width:830px;height:250px"><div class="bar" style="left:20px;top:21px"></div><div class="ct" style="left:37px;top:18px">主机/系统COP</div><svg class="abs" style="left:20px;top:40px;overflow:hidden" width="790" height="210" viewBox="1099 468 790 210"><defs><linearGradient id="g30" x1="0" y1="0" x2="0" y2="1"><stop offset="0" stop-color="#b8a0e0" stop-opacity="0.1"/><stop offset="1" stop-color="#b8a0e0" stop-opacity="0.0"/></linearGradient><linearGradient id="g31" x1="0" y1="0" x2="0" y2="1"><stop offset="0" stop-color="#68d5d8" stop-opacity="0.5"/><stop offset="1" stop-color="#68d5d8" stop-opacity="0.0"/></linearGradient></defs><path d="M1177.8 622.5H1849.4" stroke="#e4e4e7" stroke-width="1" stroke-dasharray="4 3" fill="none"/><path d="M1177.8 600.5H1849.4" stroke="#e4e4e7" stroke-width="1" stroke-dasharray="4 3" fill="none"/><path d="M1177.8 579.5H1849.4" stroke="#e4e4e7" stroke-width="1" stroke-dasharray="4 3" fill="none"/><path d="M1177.8 557.5H1849.4" stroke="#e4e4e7" stroke-width="1" stroke-dasharray="4 3" fill="none"/><path d="M1177.8 536.5H1849.4" stroke="#e4e4e7" stroke-width="1" stroke-dasharray="4 3" fill="none"/><path d="M1177.8 524.5H1849.4" stroke="#e4e4e7" stroke-width="1" stroke-dasharray="4 3" fill="none"/><path d="M1178.5 524.5V643.5" stroke="#e4e4e7" stroke-width="1" stroke-dasharray="4 3" fill="none"/><path d="M1332.5 524.5V643.5" stroke="#e4e4e7" stroke-width="1" stroke-dasharray="4 3" fill="none"/><path d="M1486.5 524.5V643.5" stroke="#e4e4e7" stroke-width="1" stroke-dasharray="4 3" fill="none"/><path d="M1640.5 524.5V643.5" stroke="#e4e4e7" stroke-width="1" stroke-dasharray="4 3" fill="none"/><path d="M1793.5 524.5V643.5" stroke="#e4e4e7" stroke-width="1" stroke-dasharray="4 3" fill="none"/><path d="M1848.5 524.5V643.5" stroke="#e4e4e7" stroke-width="1" stroke-dasharray="4 3" fill="none"/><path d="M1849.5 524.5V643.5" stroke="#e4e4e7" stroke-width="1" stroke-dasharray="4 3" fill="none"/><path d="M1177.8 547.8C1177.8 547.8 1179 565.1 1180.1 582.3C1181.3 599.4 1181.7 622.6 1182.5 616.5C1184 603.5 1183.5 547.1 1184.8 544C1185.9 541.4 1185.2 574.7 1187.1 605.1C1187.5 610.9 1189.1 620.7 1189.5 616.5C1191.5 590.3 1190.5 548.2 1191.8 544.3C1192.8 541.1 1192.5 573.4 1194.1 602.4C1194.8 614.3 1195.9 630.5 1196.5 626.2C1198.2 605.5 1197.4 554.4 1198.8 548.5C1199.8 544.1 1199.4 577.1 1201.1 605.7C1201.7 615.7 1203 630.5 1203.5 625.7C1205.3 601.9 1204.4 553.3 1205.8 546C1206.7 540.9 1206.5 573.5 1208.1 601C1208.9 614.3 1209.8 630.5 1210.4 627.7C1212.2 610.5 1211.4 560.5 1212.8 554.2C1213.7 549.7 1212.9 580.9 1215.1 606C1215.2 607.2 1217.4 608 1217.4 606.8C1219.7 576.6 1218.3 552.5 1219.8 543.2C1220.6 538.1 1221 560.7 1222.1 578.1C1223.3 597.2 1223.6 621.7 1224.4 616.2C1225.9 606.3 1225.4 551.9 1226.8 547.1C1227.8 543.5 1227.4 573.4 1229.1 599.5C1229.8 609.8 1230.9 625.9 1231.4 620C1233.3 598.3 1232.4 551.3 1233.8 544.4C1234.7 539.6 1233.9 570.8 1236.1 596.5C1236.3 598.3 1238.3 600.9 1238.4 599.4C1240.6 580.2 1239.6 555.8 1240.8 555C1241.9 554.3 1241.8 575.7 1243.1 596.4C1244.1 613 1244.7 630.5 1245.4 629.6C1247.1 613.8 1246.3 562.1 1247.8 551.5C1248.6 545.4 1248 574.1 1250.1 596.1C1250.3 598.5 1252.2 602.2 1252.4 600.2C1254.6 579 1252.8 566.9 1254.8 549.7C1255.1 546.3 1256.8 554.3 1257.1 559.1C1259.1 594.1 1258.3 630.5 1259.4 629.3C1260.7 626.5 1259.7 578.1 1261.8 548.6C1262.1 544 1262.1 555.8 1264.1 561.1C1264.4 562 1265.7 561.8 1266.4 561C1268.1 559.1 1268.5 553.4 1268.7 555.7C1270.8 575.2 1269.2 580.2 1271.1 604.6C1271.5 610.5 1273.1 620.6 1273.4 616.3C1275.4 591.4 1274.1 560.1 1275.7 546.1C1276.4 540.1 1277.2 561.2 1278.1 576.3C1279.5 600.5 1279.5 630.1 1280.4 624.8C1281.8 616.5 1280.7 577.3 1282.7 549.1C1283 544.9 1284.6 554.5 1285.1 560.1C1287 584.8 1286.3 610.8 1287.4 609.7C1288.6 608.4 1287.5 582 1289.7 555.4C1289.9 554 1291.3 553.1 1292.1 553.7C1293.6 554.9 1293.4 559.5 1294.4 559C1295.7 558.4 1296.2 549.4 1296.7 551.5C1298.5 558.1 1298.3 563.9 1299.1 576.4C1300.6 600.8 1300.4 629.9 1301.4 625.3C1302.8 618.5 1301.6 583 1303.7 553.5C1303.9 550.6 1305.8 556.8 1306.1 560.4C1308.1 587.9 1307.3 617 1308.4 615.7C1309.6 614.4 1308.6 585.3 1310.7 555.2C1311 551.8 1312.2 547.7 1313.1 548.7C1314.6 550.7 1313.5 556.7 1315.4 561.3C1315.8 562.3 1317.6 558.7 1317.7 559.9C1319.9 579.5 1318.5 581.4 1320 602.8C1320.8 613.3 1321.9 629.9 1322.4 623.7C1324.2 600.5 1322.6 578.1 1324.7 544.1C1324.9 541.3 1326.1 547 1327 550.1C1328.4 554.8 1327.8 555.1 1329.4 559.7C1330.1 561.7 1330.6 563.4 1331.7 563.3C1332.9 563.2 1332.6 560.2 1334 559.4C1334.9 558.9 1335.9 561.6 1336.4 560.7C1338.2 557 1338.3 546.7 1338.7 550.3C1340.6 567.1 1338.9 576 1341 601.3C1341.3 604.2 1343.2 609.2 1343.4 606.7C1345.5 580.1 1344.2 552 1345.7 543C1346.5 538 1347 560.9 1348 578.7C1349.3 601 1349.5 629.2 1350.4 623.3C1351.8 613.1 1350.5 580.8 1352.7 546.5C1352.8 544.4 1354.4 548.3 1355 550.5C1356.7 555.9 1355.5 557.7 1357.4 561.7C1357.8 562.6 1359.3 559.4 1359.7 560.4C1361.7 565.7 1361.5 567.3 1362 574.4C1363.8 597.6 1363.4 625.5 1364.4 620.9C1365.8 614 1364.4 585.6 1366.7 551.5C1366.8 550.1 1368.5 548.9 1369 549.8C1370.9 553.3 1369.4 556.2 1371.4 560.3C1371.8 561.2 1372.9 559.1 1373.7 559.8C1375.3 561.1 1375.8 561.7 1376 564.2C1378.2 591.8 1377.3 623.8 1378.3 619.9C1379.7 614.8 1379.3 553.8 1380.7 546.1C1381.6 541 1381.6 570.3 1383 594.4C1383.9 610.1 1384.7 630.5 1385.3 625.7C1387 608.3 1386.1 560.1 1387.7 546C1388.4 539.2 1388.8 564.9 1390 583.9C1391.1 600.2 1391.6 622.2 1392.3 616.5C1393.9 604.4 1393.4 551.3 1394.7 548.4C1395.7 545.9 1395.3 577.1 1397 605.7C1397.6 616 1398.8 630.5 1399.3 626.1C1401.2 605.9 1399.6 582.7 1401.7 553.7C1401.9 550.5 1402.2 559.1 1404 561.6C1404.6 562.4 1405.9 561.4 1406.3 560.2C1408.3 554.4 1408 544.6 1408.7 547.6C1410.4 555.7 1409.9 565 1411 582.4C1412.3 603.6 1412.5 630.5 1413.3 624.7C1414.9 612.4 1414.1 558.3 1415.7 544.7C1416.4 538 1416.9 585.4 1418 584C1419.2 582.4 1418.1 560.8 1420.3 538.6C1420.5 537.2 1421.4 537.5 1422.7 537C1423.7 536.6 1424.9 535.8 1425 536.9C1427.2 567.4 1425.7 568.6 1427.3 600.2C1428 613.9 1429.1 630.5 1429.7 627.5C1431.5 599.7 1429.7 576.7 1432 529.3C1432 528.1 1433.3 530.6 1434.3 530.2C1435.7 529.8 1436.5 526.2 1436.6 527.8C1438.9 562 1437.1 564.9 1439 601.9C1439.5 611.5 1439.3 611.8 1441.3 621C1441.7 622.7 1443.5 625.4 1443.6 623.8C1445.9 585.3 1443.7 581.7 1446 540.8C1446 539.4 1447.4 540.3 1448.3 539.3C1449.8 537.6 1450.5 533.2 1450.6 535.3C1452.8 564.9 1451.8 601.8 1453 602.6C1454.1 603.4 1453.1 568.5 1455.3 538.5C1455.4 537.2 1456.6 540.2 1457.6 539.9C1459 539.6 1459.8 535.4 1460 537.1C1462.2 565.1 1460.6 568.2 1462.3 599.2C1462.9 610.6 1462.5 611.1 1464.6 621.8C1464.9 623 1465.7 622.6 1467 623C1468.1 623.4 1468.2 623.1 1469.3 623.4C1470.5 623.7 1470.5 624.3 1471.6 624.2C1472.8 624.1 1473.9 624.3 1474 623C1476.2 580.1 1474 577.2 1476.3 535.8C1476.4 534.4 1477.9 538.1 1478.6 537.5C1480.2 536.2 1480.8 529.2 1481 531.8C1483.1 561.1 1481.5 566.7 1483.3 601.4C1483.8 611.8 1483.6 612.3 1485.6 622.1C1485.9 623.5 1486.7 623.5 1487.9 623.8C1489 624.1 1489.4 622.7 1490.3 623.2C1491.7 624.1 1491.6 626.7 1492.6 626.5C1493.9 626.3 1493.7 622.4 1494.9 622.3C1496.1 622.2 1497.2 628.3 1497.3 626.2C1499.5 588.4 1497.3 583.5 1499.6 542.6C1499.7 541.4 1501.1 542.9 1501.9 542.1C1503.4 540.8 1504.1 536.6 1504.3 538.5C1506.5 566.8 1504.8 570.6 1506.6 602.6C1507.1 611.1 1507.2 611.3 1508.9 619.6C1509.5 622.1 1509.8 623.3 1511.3 624.3C1512.1 624.8 1512.3 623 1513.6 622.6C1514.6 622.3 1514.8 623.1 1515.9 622.9C1517.1 622.8 1517.5 621.4 1518.3 622C1519.8 623.2 1520.5 628.8 1520.6 626.5C1522.8 587.1 1520.7 581.2 1522.9 538.7C1523 537.6 1524.5 539.8 1525.3 539.2C1526.8 538.1 1527.4 533.4 1527.6 535.4C1529.8 565.7 1528.1 569.6 1529.9 603.8C1530.4 613.3 1530.3 613.6 1532.3 622.6C1532.6 624.3 1533.2 624.4 1534.6 625.1C1535.5 625.6 1535.8 625.1 1536.9 625C1538.1 624.9 1538.2 625.1 1539.3 624.7C1540.5 624.3 1540.3 623.7 1541.6 623.3C1542.7 623 1542.8 623.5 1543.9 623.3C1545.1 623.1 1545.1 622.9 1546.2 622.6C1547.4 622.3 1548.5 623.4 1548.6 622.2C1550.8 580 1548.6 578 1550.9 536C1551 534.8 1552.5 536.5 1553.2 535.8C1554.8 534.3 1555.4 529.5 1555.6 531.6C1557.8 561.6 1556.1 565.8 1557.9 599.9C1558.4 609.9 1558.3 610.1 1560.2 619.9C1560.7 621.9 1561.1 622 1562.6 623.5C1563.5 624.4 1563.7 624.6 1564.9 624.8C1566 625 1566.3 624.9 1567.2 624.3C1568.6 623.4 1568.4 621.7 1569.6 621.7C1570.7 621.7 1571.8 625.9 1571.9 624.3C1574.1 584.2 1572 581 1574.2 538.4C1574.3 536.2 1575.1 536.1 1576.6 534.7C1577.4 533.9 1578.8 532.8 1578.9 534C1581.2 568.7 1579.3 570.3 1581.2 606.5C1581.6 614 1581.8 614.2 1583.6 621.3C1584.1 623.6 1584.3 624.1 1585.9 625.5C1586.7 626.1 1587.1 625.6 1588.2 625.4C1589.4 625.2 1590.5 625.9 1590.6 624.7C1592.8 580.1 1590.7 579 1592.9 533.8C1593 531.4 1594 531.7 1595.2 529.6C1596.3 527.7 1597.4 524.5 1597.5 525.9C1599.8 560.6 1598 564.5 1599.9 602.9C1600.3 611.4 1600.5 611.5 1602.2 619.8C1602.9 623 1603 624.8 1604.5 626.1C1605.3 626.7 1605.5 624 1606.9 623.5C1607.8 623.1 1609.1 625.5 1609.2 624.3C1611.5 582.5 1609.3 580.3 1611.5 537.6C1611.6 536.2 1613 537.1 1613.9 536.1C1615.4 534.2 1616.1 529.4 1616.2 531.6C1618.4 564.6 1616.6 569 1618.5 606.3C1618.9 614 1618.9 614.7 1620.9 621.7C1621.2 622.8 1622.3 621.7 1623.2 622.5C1624.6 623.7 1624.2 625.4 1625.5 625.7C1626.6 625.9 1626.5 624.1 1627.9 623.4C1628.8 622.9 1630.1 624.4 1630.2 623.2C1632.5 581.3 1630.3 578.7 1632.5 537.3C1632.6 536.1 1634.1 538.7 1634.9 538.2C1636.4 537.1 1637 532 1637.2 534C1639.4 565.1 1637.6 569.3 1639.5 604.4C1639.9 612 1640.2 612.1 1641.9 619.5C1642.5 622.2 1644.1 627.1 1644.2 624.6C1646.4 579.6 1644.6 557.4 1646.5 524.5C1646.9 524.5 1646.8 535.5 1648.9 545.1C1649.1 546.3 1650.9 547.2 1651.2 546.2C1653.2 539.5 1651.6 537.6 1653.5 529.6C1653.9 527.8 1655.7 525 1655.8 526.7C1658.1 559.2 1656.4 562.3 1658.2 597.9C1658.8 609.4 1658.5 609.8 1660.5 620.9C1660.8 622.5 1661.5 622.6 1662.8 623.3C1663.8 623.8 1664 623.5 1665.2 623.3C1666.4 623.2 1667.4 623.8 1667.5 622.7C1669.8 576.6 1667.6 573.7 1669.8 528.9C1669.9 527.6 1671.5 531.1 1672.2 530.4C1673.8 528.9 1674.3 524.5 1674.5 524.6C1676.7 556.3 1675 561.9 1676.8 599.1C1677.4 609.7 1677.2 609.9 1679.2 620.2C1679.6 622.3 1680 622.6 1681.5 623.8C1682.3 624.5 1682.7 624 1683.8 624.1C1685 624.2 1686.1 625.3 1686.2 624.2C1688.4 581.6 1686.3 580.2 1688.5 536.6C1688.6 533.8 1689.6 531.8 1690.8 531.5C1691.9 531.3 1691.9 535.4 1693.2 535.7C1694.2 535.9 1695.4 530.9 1695.5 532.7C1697.7 566.5 1695.9 569.8 1697.8 606.8C1698.2 614 1698.2 614.5 1700.2 621.1C1700.5 622.4 1701.4 621.7 1702.5 622.6C1703.7 623.6 1704.7 626.2 1704.8 624.7C1707.1 578.1 1704.9 572.1 1707.2 526.4C1707.2 524.6 1708.4 529.8 1709.5 529.6C1710.7 529.4 1711.7 524.5 1711.8 525.7C1714 559.2 1712.3 563.3 1714.1 600.9C1714.6 610.2 1714.6 610.4 1716.5 619.5C1717 622 1717.2 622.5 1718.8 624.1C1719.5 624.8 1720 624.3 1721.1 624C1722.4 623.8 1723.4 624.3 1723.5 623C1725.7 577.2 1723.6 575.9 1725.8 529.9C1725.9 528.3 1727 527.6 1728.1 527.7C1729.3 527.7 1729.2 529.9 1730.5 530C1731.6 530.1 1732.7 526.8 1732.8 528.2C1735 563.2 1733.2 565.5 1735.1 602.8C1735.6 611.4 1735.7 611.5 1737.5 619.8C1738 622.5 1738.3 623.6 1739.8 624.7C1740.6 625.3 1742.1 624.6 1742.1 623.2C1744.4 577.4 1742.2 575.8 1744.5 530.4C1744.5 529.2 1745.9 530.6 1746.8 529.9C1748.2 528.9 1749 525.2 1749.1 526.9C1751.3 560.4 1749.7 563.7 1751.5 600.3C1752 611 1751.7 611.5 1753.8 621.6C1754.1 623.1 1754.8 623.1 1756.1 623.6C1757.1 624 1757.5 622.9 1758.5 623.3C1759.8 624 1760.7 627.5 1760.8 625.8C1763 581.1 1760.9 575.4 1763.1 530.6C1763.2 529 1764.1 532.6 1765.5 533C1766.5 533.3 1766.9 532.8 1767.8 532C1769.2 530.7 1770 527 1770.1 528.8C1772.3 563.8 1770.5 567.3 1772.4 605.5C1772.8 612.6 1772.9 612.9 1774.8 619.6C1775.3 621.4 1775.8 621.2 1777.1 622.6C1778.1 623.7 1779.4 625.9 1779.4 624.5C1781.7 583.1 1779.5 580 1781.8 536.9C1781.8 535.6 1783.2 536.6 1784.1 535.8C1785.5 534.6 1786.2 531.2 1786.4 532.8C1788.6 550 1787.7 553.1 1788.8 573.3C1790 595.9 1790.2 624.2 1791.1 618.5C1792.6 608.9 1792 550.7 1793.4 542.8C1794.4 537.6 1794.3 567.6 1795.8 592.4C1796.6 606.7 1797.4 627.3 1798.1 621C1799.8 605.1 1799 556.9 1800.4 548.1C1801.3 542.7 1801.5 570.4 1802.8 592.7C1803.8 610.1 1804.4 630.5 1805.1 627.4C1806.7 609.9 1805.6 566.8 1807.4 543.2C1807.9 536.5 1809.1 555 1809.8 566.9C1811.4 598.2 1811.1 630.5 1812.1 629.5C1813.4 622.3 1813 553.4 1814.4 542.2C1815.3 535.6 1815.4 568 1816.8 593.8C1817.7 611.7 1817.7 626.3 1819.1 629.6C1820 630.5 1820.4 617.3 1821.4 605C1822.7 589.5 1822.9 570.3 1823.7 574C1825.2 580.1 1825.1 628.9 1826.1 624.5C1827.4 618.4 1826.8 567.7 1828.4 552.9C1829.1 546.8 1829.7 567.8 1830.7 582.6C1832 601.3 1832.3 625.7 1833.1 620C1834.6 609.4 1834 557.7 1835.4 550.1C1836.3 545.2 1836.4 572.6 1837.7 595.1C1838.8 612.8 1839.4 630.5 1840.1 630.5C1841.7 613.3 1840.6 568.9 1842.4 546.1C1842.9 539.3 1843.9 558.7 1844.7 571.3C1846.3 594.8 1846.1 621.6 1847.1 618.3C1848.4 613.9 1849.4 555.8 1849.4 555.8L1849.4 643.5L1177.8 643.5Z" fill="url(#g30)" stroke="none"/><path d="M1177.8 547.8C1177.8 547.8 1179 565.1 1180.1 582.3C1181.3 599.4 1181.7 622.6 1182.5 616.5C1184 603.5 1183.5 547.1 1184.8 544C1185.9 541.4 1185.2 574.7 1187.1 605.1C1187.5 610.9 1189.1 620.7 1189.5 616.5C1191.5 590.3 1190.5 548.2 1191.8 544.3C1192.8 541.1 1192.5 573.4 1194.1 602.4C1194.8 614.3 1195.9 630.5 1196.5 626.2C1198.2 605.5 1197.4 554.4 1198.8 548.5C1199.8 544.1 1199.4 577.1 1201.1 605.7C1201.7 615.7 1203 630.5 1203.5 625.7C1205.3 601.9 1204.4 553.3 1205.8 546C1206.7 540.9 1206.5 573.5 1208.1 601C1208.9 614.3 1209.8 630.5 1210.4 627.7C1212.2 610.5 1211.4 560.5 1212.8 554.2C1213.7 549.7 1213.5 580.1 1215.1 606C1215.9 618.1 1216.9 630.5 1217.4 630.1C1219.3 605.6 1218.1 561.8 1219.8 543.2C1220.4 535.8 1221 560.7 1222.1 578.1C1223.3 597.2 1223.6 621.7 1224.4 616.2C1225.9 606.3 1225.4 551.9 1226.8 547.1C1227.8 543.5 1227.4 573.4 1229.1 599.5C1229.8 609.8 1230.9 625.9 1231.4 620C1233.3 598.3 1232.4 551.3 1233.8 544.4C1234.7 539.6 1234.7 570.4 1236.1 596.5C1237 613.3 1237.7 630.5 1238.4 630.1C1240 615.8 1239.3 565.9 1240.8 555C1241.6 549 1241.8 575.7 1243.1 596.4C1244.1 613 1244.7 630.5 1245.4 629.6C1247.1 613.8 1246.3 562.1 1247.8 551.5C1248.6 545.4 1248.8 573.8 1250.1 596.1C1251.1 613.1 1251.7 630.5 1252.4 630.1C1254.1 613.8 1252.7 581.3 1254.8 549.7C1255 545.8 1256.8 554.3 1257.1 559.1C1259.1 594.1 1258.3 630.5 1259.4 629.3C1260.7 626.5 1259.7 578.1 1261.8 548.6C1262.1 544 1262.1 555.8 1264.1 561.1C1264.4 562 1265.7 561.8 1266.4 561C1268.1 559.1 1268.5 553.4 1268.7 555.7C1270.8 575.2 1269.2 580.2 1271.1 604.6C1271.5 610.5 1273.1 620.6 1273.4 616.3C1275.4 591.4 1274.1 560.1 1275.7 546.1C1276.4 540.1 1277.2 561.2 1278.1 576.3C1279.5 600.5 1279.5 630.1 1280.4 624.8C1281.8 616.5 1280.7 577.3 1282.7 549.1C1283 544.9 1284.7 554.5 1285.1 560.1C1287.1 595 1286.3 630.5 1287.4 630.1C1288.6 628.9 1287.5 592.2 1289.7 555.4C1289.8 553.9 1291.3 553.1 1292.1 553.7C1293.6 554.9 1293.4 559.5 1294.4 559C1295.7 558.4 1296.2 549.4 1296.7 551.5C1298.5 558.1 1298.3 563.9 1299.1 576.4C1300.6 600.8 1300.4 629.9 1301.4 625.3C1302.8 618.5 1301.6 583 1303.7 553.5C1303.9 550.6 1305.8 556.8 1306.1 560.4C1308.1 587.9 1307.3 617 1308.4 615.7C1309.6 614.4 1308.6 585.3 1310.7 555.2C1311 551.8 1312.2 547.7 1313.1 548.7C1314.6 550.7 1313.5 556.7 1315.4 561.3C1315.8 562.3 1317.6 558.7 1317.7 559.9C1320 593.1 1317.9 601.1 1320 630.1C1320.3 630.5 1322.2 627.1 1322.4 623.7C1324.5 584.1 1322.6 578.1 1324.7 544.1C1324.9 541.3 1326.1 547 1327 550.1C1328.4 554.8 1327.8 555.1 1329.4 559.7C1330.1 561.7 1330.6 563.4 1331.7 563.3C1332.9 563.2 1332.6 560.2 1334 559.4C1334.9 558.9 1335.9 561.6 1336.4 560.7C1338.2 557 1338.3 546.7 1338.7 550.3C1340.6 567.1 1339.5 575.8 1341 601.3C1341.9 615.7 1342.8 630.5 1343.4 630.1C1345.1 608.3 1344 561.2 1345.7 543C1346.4 535.5 1347 560.9 1348 578.7C1349.3 601 1349.5 629.2 1350.4 623.3C1351.8 613.1 1350.5 580.8 1352.7 546.5C1352.8 544.4 1354.4 548.3 1355 550.5C1356.7 555.9 1355.5 557.7 1357.4 561.7C1357.8 562.6 1359.3 559.4 1359.7 560.4C1361.7 565.7 1361.5 567.3 1362 574.4C1363.8 597.6 1363.4 625.5 1364.4 620.9C1365.8 614 1364.4 585.6 1366.7 551.5C1366.8 550.1 1368.5 548.9 1369 549.8C1370.9 553.3 1369.4 556.2 1371.4 560.3C1371.8 561.2 1372.9 559.1 1373.7 559.8C1375.3 561.1 1375.8 561.7 1376 564.2C1378.2 591.8 1377.3 623.8 1378.3 619.9C1379.7 614.8 1379.3 553.8 1380.7 546.1C1381.6 541 1381.6 570.3 1383 594.4C1383.9 610.1 1384.7 630.5 1385.3 625.7C1387 608.3 1386.1 560.1 1387.7 546C1388.4 539.2 1388.8 564.9 1390 583.9C1391.1 600.2 1391.6 622.2 1392.3 616.5C1393.9 604.4 1393.4 551.3 1394.7 548.4C1395.7 545.9 1395.3 577.1 1397 605.7C1397.6 616 1398.8 630.5 1399.3 626.1C1401.2 605.9 1399.6 582.7 1401.7 553.7C1401.9 550.5 1402.2 559.1 1404 561.6C1404.6 562.4 1405.9 561.4 1406.3 560.2C1408.3 554.4 1408 544.6 1408.7 547.6C1410.4 555.7 1409.9 565 1411 582.4C1412.3 603.6 1412.5 630.5 1413.3 624.7C1414.9 612.4 1414.1 558.3 1415.7 544.7C1416.4 538 1416.9 585.4 1418 584C1419.2 582.4 1418.1 560.8 1420.3 538.6C1420.5 537.2 1421.4 537.5 1422.7 537C1423.7 536.6 1424.9 535.8 1425 536.9C1427.3 579.3 1425.1 580.8 1427.3 624C1427.4 626.1 1429.6 629.4 1429.7 627.5C1431.9 582.1 1429.7 576.7 1432 529.3C1432 528.1 1433.3 530.6 1434.3 530.2C1435.7 529.8 1436.6 526.2 1436.6 527.8C1438.9 572.2 1436.8 575.2 1439 622.2C1439.1 625.8 1439.6 627.2 1441.3 629.1C1442 629.9 1443.6 629 1443.6 627.6C1445.9 584.8 1443.7 583.6 1446 540.8C1446 539.4 1447.4 540.3 1448.3 539.3C1449.8 537.6 1450.5 533.1 1450.6 535.3C1452.9 575.1 1451.8 622.4 1453 623.2C1454.1 624 1453 578.8 1455.3 538.5C1455.4 537.1 1456.6 540.2 1457.6 539.9C1459 539.6 1459.9 535.4 1460 537.1C1462.2 577.5 1460.1 580.9 1462.3 624.3C1462.4 626.8 1463.1 627.8 1464.6 628.9C1465.4 629.5 1465.8 627.6 1467 627.7C1468.1 627.7 1468.1 628.8 1469.3 629C1470.4 629.2 1470.5 628.9 1471.6 628.5C1472.8 628.1 1473.9 628.8 1474 627.5C1476.2 582.4 1474 579.4 1476.3 535.8C1476.4 534.4 1477.9 538.1 1478.6 537.5C1480.2 536.2 1480.8 529.1 1481 531.8C1483.1 572.4 1481.1 578.2 1483.3 624.1C1483.4 626.8 1484 627.1 1485.6 629.1C1486.3 630 1486.8 629.8 1487.9 629.8C1489.1 629.8 1489.1 629.2 1490.3 629.1C1491.4 629 1491.5 629.7 1492.6 629.5C1493.8 629.3 1493.8 628.3 1494.9 628.3C1496.1 628.2 1497.2 630.5 1497.3 629.2C1499.5 587.6 1497.3 585 1499.6 542.6C1499.7 541.4 1501.1 542.9 1501.9 542.1C1503.4 540.8 1504.2 536.5 1504.3 538.5C1506.5 577.4 1504.4 581.4 1506.6 623.9C1506.7 626.5 1507.3 627.2 1508.9 628.7C1509.7 629.3 1510.1 628.1 1511.3 628.1C1512.4 628.1 1512.4 628.5 1513.6 628.7C1514.8 628.8 1514.8 628.8 1515.9 628.6C1517.1 628.4 1517.2 627.5 1518.3 627.7C1519.6 628.1 1520.5 630.5 1520.6 629.8C1522.9 586.7 1520.7 582.8 1522.9 538.7C1523 537.6 1524.5 539.8 1525.3 539.2C1526.8 538.1 1527.5 533.4 1527.6 535.4C1529.8 575.9 1527.7 580.2 1529.9 624.4C1530 626.5 1530.9 626.3 1532.3 627.9C1533.2 629 1533.4 629.7 1534.6 629.8C1535.7 629.9 1535.6 628.6 1536.9 628.2C1538 627.8 1538.1 628 1539.3 628.2C1540.4 628.4 1540.4 628.7 1541.6 628.8C1542.7 628.9 1542.8 628.7 1543.9 628.4C1545.1 628.1 1545 627.7 1546.2 627.6C1547.4 627.4 1548.5 628.9 1548.6 627.8C1550.9 583.1 1548.6 580.8 1550.9 536C1551 534.8 1552.5 536.5 1553.2 535.8C1554.8 534.3 1555.5 529.4 1555.6 531.6C1557.8 573.2 1555.7 577.7 1557.9 623.4C1558.1 626.8 1558.6 628 1560.2 629.8C1560.9 630.5 1561.3 628.7 1562.6 628.4C1563.7 628.2 1563.8 628.5 1564.9 628.7C1566.1 629 1566.2 629.6 1567.2 629.4C1568.5 629.2 1568.3 628 1569.6 627.7C1570.6 627.5 1571.8 629.7 1571.9 628.5C1574.2 585.1 1572 583.1 1574.2 538.4C1574.3 536.2 1575.1 536.1 1576.6 534.7C1577.4 533.9 1578.8 532.8 1578.9 534C1581.2 577.6 1579 579.4 1581.2 624.3C1581.4 626.9 1582 627.2 1583.6 629C1584.3 629.9 1584.8 629.7 1585.9 629.7C1587.1 629.6 1587 628.7 1588.2 628.7C1589.4 628.6 1590.5 630.5 1590.6 629.5C1592.8 583.3 1590.7 581.4 1592.9 533.8C1593 531.4 1594 531.7 1595.2 529.6C1596.3 527.7 1597.4 524.5 1597.5 525.9C1599.8 570.4 1597.7 574.5 1599.9 622.8C1600 626.3 1600.5 626.8 1602.2 629.4C1602.8 630.2 1603.4 629.9 1604.5 629.7C1605.8 629.4 1605.7 628.9 1606.9 628.5C1608 628.1 1609.2 629.2 1609.2 628.1C1611.5 583.7 1609.3 582.2 1611.5 537.6C1611.6 536.2 1613 537.1 1613.9 536.1C1615.4 534.2 1616.1 529.4 1616.2 531.6C1618.4 573.6 1616.3 578.3 1618.5 624.4C1618.7 626.8 1619.3 627.4 1620.9 628.7C1621.6 629.3 1622.1 628.1 1623.2 628.3C1624.4 628.5 1624.3 629.4 1625.5 629.5C1626.7 629.5 1626.7 628.6 1627.9 628.5C1629 628.4 1630.1 630.3 1630.2 629.1C1632.5 584.7 1630.3 581.6 1632.5 537.3C1632.6 536.1 1634.1 538.7 1634.9 538.2C1636.4 537.1 1637.1 531.9 1637.2 534C1639.4 574.1 1637.3 578.5 1639.5 622.5C1639.7 625.4 1640.2 625.7 1641.9 627.9C1642.5 628.8 1644.1 629.9 1644.2 628.7C1646.5 578.2 1644.6 559.4 1646.5 524.5C1646.9 524.5 1646.8 535.5 1648.9 545.1C1649.1 546.3 1650.9 547.2 1651.2 546.2C1653.2 539.5 1651.6 537.6 1653.5 529.6C1653.9 527.8 1655.8 525 1655.8 526.7C1658.1 571.9 1656 575.3 1658.2 623.4C1658.3 626.2 1658.9 626.6 1660.5 628.6C1661.2 629.4 1661.8 629.1 1662.8 628.9C1664.1 628.7 1663.9 627.8 1665.2 627.6C1666.3 627.4 1667.5 629.1 1667.5 627.9C1669.8 579.8 1667.6 576.4 1669.8 528.9C1669.9 527.6 1671.5 531.1 1672.2 530.4C1673.8 528.9 1674.4 524.5 1674.5 524.6C1676.7 568.4 1674.6 574.4 1676.8 623.6C1676.9 625.9 1677.6 626.2 1679.2 627.6C1679.9 628.4 1680.3 627.8 1681.5 627.9C1682.7 628.1 1682.7 627.8 1683.8 628.1C1685 628.4 1686.1 630.3 1686.2 629.1C1688.4 584.6 1686.3 582.6 1688.5 536.6C1688.6 533.8 1689.6 531.8 1690.8 531.5C1691.9 531.3 1691.9 535.4 1693.2 535.7C1694.2 535.9 1695.4 530.9 1695.5 532.7C1697.7 575.2 1695.6 578.7 1697.8 624.3C1698 627.1 1698.6 628.3 1700.2 629.4C1701 629.9 1701.3 627.7 1702.5 627.6C1703.6 627.5 1704.8 630.3 1704.8 629C1707.1 579.7 1704.9 574.3 1707.2 526.4C1707.2 524.6 1708.4 529.8 1709.5 529.6C1710.7 529.4 1711.7 524.5 1711.8 525.7C1714 570.8 1711.9 575.2 1714.1 624C1714.2 626.2 1715 626.3 1716.5 627.8C1717.3 628.6 1717.6 628.3 1718.8 628.7C1720 629.2 1720 629.7 1721.1 629.6C1722.4 629.4 1723.4 629.4 1723.5 628C1725.7 579.6 1723.5 578.5 1725.8 529.9C1725.9 528.3 1727 527.6 1728.1 527.7C1729.3 527.7 1729.2 529.9 1730.5 530C1731.6 530.1 1732.7 526.8 1732.8 528.2C1735.1 574 1732.9 576.5 1735.1 624.4C1735.3 627.2 1735.8 627.8 1737.5 629.4C1738.2 630.1 1738.6 629.1 1739.8 629.1C1741 629 1742.1 630.4 1742.1 629.3C1744.4 581.1 1742.2 578.9 1744.5 530.4C1744.5 529.2 1745.9 530.6 1746.8 529.9C1748.2 528.9 1749 525.2 1749.1 526.9C1751.4 571.4 1749.3 574.8 1751.5 622.3C1751.6 626 1752 626.6 1753.8 629.4C1754.4 630.3 1755 629.8 1756.1 629.7C1757.3 629.5 1757.3 628.8 1758.5 628.7C1759.6 628.7 1760.7 630.5 1760.8 629.4C1763.1 581.5 1760.9 577.2 1763.1 530.6C1763.2 529 1764.1 532.6 1765.5 533C1766.5 533.3 1766.9 532.8 1767.8 532C1769.2 530.7 1770 527 1770.1 528.8C1772.4 572.5 1770.2 576.1 1772.4 622.9C1772.6 625.6 1773.2 625.9 1774.8 627.8C1775.5 628.7 1775.9 628.4 1777.1 628.5C1778.3 628.6 1779.4 629.3 1779.4 628.1C1781.7 583.5 1779.5 581.8 1781.8 536.9C1781.8 535.6 1783.2 536.6 1784.1 535.8C1785.5 534.6 1786.2 531.2 1786.4 532.8C1788.6 550 1787.7 553.1 1788.8 573.3C1790 595.9 1790.2 624.2 1791.1 618.5C1792.6 608.9 1792 550.7 1793.4 542.8C1794.4 537.6 1794.3 567.6 1795.8 592.4C1796.6 606.7 1797.4 627.3 1798.1 621C1799.8 605.1 1799 556.9 1800.4 548.1C1801.3 542.7 1801.5 570.4 1802.8 592.7C1803.8 610.1 1804.4 630.5 1805.1 627.4C1806.7 609.9 1805.6 566.8 1807.4 543.2C1807.9 536.5 1809.1 555 1809.8 566.9C1811.4 598.2 1811.1 630.5 1812.1 629.5C1813.4 622.3 1813 553.4 1814.4 542.2C1815.3 535.6 1815.4 568 1816.8 593.8C1817.7 611.7 1817.1 617.3 1819.1 629.6C1819.5 630.5 1821.1 626.6 1821.4 623.2C1823.5 598.8 1822.6 573.7 1823.7 574C1824.9 574.3 1825.1 628.9 1826.1 624.5C1827.4 618.4 1826.8 567.7 1828.4 552.9C1829.1 546.8 1829.7 567.8 1830.7 582.6C1832 601.3 1832.3 625.7 1833.1 620C1834.6 609.4 1834 557.7 1835.4 550.1C1836.3 545.2 1836.4 572.6 1837.7 595.1C1838.8 612.8 1839.4 630.5 1840.1 630.5C1841.7 613.3 1840.6 568.9 1842.4 546.1C1842.9 539.3 1843.9 558.7 1844.7 571.3C1846.3 594.8 1846.1 621.6 1847.1 618.3C1848.4 613.9 1849.4 555.8 1849.4 555.8L1849.4 643.5L1177.8 643.5Z" fill="url(#g31)" stroke="none"/><path d="M1177.8 547.8C1177.8 547.8 1179 565.1 1180.1 582.3C1181.3 599.4 1181.7 622.6 1182.5 616.5C1184 603.5 1183.5 547.1 1184.8 544C1185.9 541.4 1185.2 574.7 1187.1 605.1C1187.5 610.9 1189.1 620.7 1189.5 616.5C1191.5 590.3 1190.5 548.2 1191.8 544.3C1192.8 541.1 1192.5 573.4 1194.1 602.4C1194.8 614.3 1195.9 630.5 1196.5 626.2C1198.2 605.5 1197.4 554.4 1198.8 548.5C1199.8 544.1 1199.4 577.1 1201.1 605.7C1201.7 615.7 1203 630.5 1203.5 625.7C1205.3 601.9 1204.4 553.3 1205.8 546C1206.7 540.9 1206.5 573.5 1208.1 601C1208.9 614.3 1209.8 630.5 1210.4 627.7C1212.2 610.5 1211.4 560.5 1212.8 554.2C1213.7 549.7 1212.9 580.9 1215.1 606C1215.2 607.2 1217.4 608 1217.4 606.8C1219.7 576.6 1218.3 552.5 1219.8 543.2C1220.6 538.1 1221 560.7 1222.1 578.1C1223.3 597.2 1223.6 621.7 1224.4 616.2C1225.9 606.3 1225.4 551.9 1226.8 547.1C1227.8 543.5 1227.4 573.4 1229.1 599.5C1229.8 609.8 1230.9 625.9 1231.4 620C1233.3 598.3 1232.4 551.3 1233.8 544.4C1234.7 539.6 1233.9 570.8 1236.1 596.5C1236.3 598.3 1238.3 600.9 1238.4 599.4C1240.6 580.2 1239.6 555.8 1240.8 555C1241.9 554.3 1241.8 575.7 1243.1 596.4C1244.1 613 1244.7 630.5 1245.4 629.6C1247.1 613.8 1246.3 562.1 1247.8 551.5C1248.6 545.4 1248 574.1 1250.1 596.1C1250.3 598.5 1252.2 602.2 1252.4 600.2C1254.6 579 1252.8 566.9 1254.8 549.7C1255.1 546.3 1256.8 554.3 1257.1 559.1C1259.1 594.1 1258.3 630.5 1259.4 629.3C1260.7 626.5 1259.7 578.1 1261.8 548.6C1262.1 544 1262.1 555.8 1264.1 561.1C1264.4 562 1265.7 561.8 1266.4 561C1268.1 559.1 1268.5 553.4 1268.7 555.7C1270.8 575.2 1269.2 580.2 1271.1 604.6C1271.5 610.5 1273.1 620.6 1273.4 616.3C1275.4 591.4 1274.1 560.1 1275.7 546.1C1276.4 540.1 1277.2 561.2 1278.1 576.3C1279.5 600.5 1279.5 630.1 1280.4 624.8C1281.8 616.5 1280.7 577.3 1282.7 549.1C1283 544.9 1284.6 554.5 1285.1 560.1C1287 584.8 1286.3 610.8 1287.4 609.7C1288.6 608.4 1287.5 582 1289.7 555.4C1289.9 554 1291.3 553.1 1292.1 553.7C1293.6 554.9 1293.4 559.5 1294.4 559C1295.7 558.4 1296.2 549.4 1296.7 551.5C1298.5 558.1 1298.3 563.9 1299.1 576.4C1300.6 600.8 1300.4 629.9 1301.4 625.3C1302.8 618.5 1301.6 583 1303.7 553.5C1303.9 550.6 1305.8 556.8 1306.1 560.4C1308.1 587.9 1307.3 617 1308.4 615.7C1309.6 614.4 1308.6 585.3 1310.7 555.2C1311 551.8 1312.2 547.7 1313.1 548.7C1314.6 550.7 1313.5 556.7 1315.4 561.3C1315.8 562.3 1317.6 558.7 1317.7 559.9C1319.9 579.5 1318.5 581.4 1320 602.8C1320.8 613.3 1321.9 629.9 1322.4 623.7C1324.2 600.5 1322.6 578.1 1324.7 544.1C1324.9 541.3 1326.1 547 1327 550.1C1328.4 554.8 1327.8 555.1 1329.4 559.7C1330.1 561.7 1330.6 563.4 1331.7 563.3C1332.9 563.2 1332.6 560.2 1334 559.4C1334.9 558.9 1335.9 561.6 1336.4 560.7C1338.2 557 1338.3 546.7 1338.7 550.3C1340.6 567.1 1338.9 576 1341 601.3C1341.3 604.2 1343.2 609.2 1343.4 606.7C1345.5 580.1 1344.2 552 1345.7 543C1346.5 538 1347 560.9 1348 578.7C1349.3 601 1349.5 629.2 1350.4 623.3C1351.8 613.1 1350.5 580.8 1352.7 546.5C1352.8 544.4 1354.4 548.3 1355 550.5C1356.7 555.9 1355.5 557.7 1357.4 561.7C1357.8 562.6 1359.3 559.4 1359.7 560.4C1361.7 565.7 1361.5 567.3 1362 574.4C1363.8 597.6 1363.4 625.5 1364.4 620.9C1365.8 614 1364.4 585.6 1366.7 551.5C1366.8 550.1 1368.5 548.9 1369 549.8C1370.9 553.3 1369.4 556.2 1371.4 560.3C1371.8 561.2 1372.9 559.1 1373.7 559.8C1375.3 561.1 1375.8 561.7 1376 564.2C1378.2 591.8 1377.3 623.8 1378.3 619.9C1379.7 614.8 1379.3 553.8 1380.7 546.1C1381.6 541 1381.6 570.3 1383 594.4C1383.9 610.1 1384.7 630.5 1385.3 625.7C1387 608.3 1386.1 560.1 1387.7 546C1388.4 539.2 1388.8 564.9 1390 583.9C1391.1 600.2 1391.6 622.2 1392.3 616.5C1393.9 604.4 1393.4 551.3 1394.7 548.4C1395.7 545.9 1395.3 577.1 1397 605.7C1397.6 616 1398.8 630.5 1399.3 626.1C1401.2 605.9 1399.6 582.7 1401.7 553.7C1401.9 550.5 1402.2 559.1 1404 561.6C1404.6 562.4 1405.9 561.4 1406.3 560.2C1408.3 554.4 1408 544.6 1408.7 547.6C1410.4 555.7 1409.9 565 1411 582.4C1412.3 603.6 1412.5 630.5 1413.3 624.7C1414.9 612.4 1414.1 558.3 1415.7 544.7C1416.4 538 1416.9 585.4 1418 584C1419.2 582.4 1418.1 560.8 1420.3 538.6C1420.5 537.2 1421.4 537.5 1422.7 537C1423.7 536.6 1424.9 535.8 1425 536.9C1427.2 567.4 1425.7 568.6 1427.3 600.2C1428 613.9 1429.1 630.5 1429.7 627.5C1431.5 599.7 1429.7 576.7 1432 529.3C1432 528.1 1433.3 530.6 1434.3 530.2C1435.7 529.8 1436.5 526.2 1436.6 527.8C1438.9 562 1437.1 564.9 1439 601.9C1439.5 611.5 1439.3 611.8 1441.3 621C1441.7 622.7 1443.5 625.4 1443.6 623.8C1445.9 585.3 1443.7 581.7 1446 540.8C1446 539.4 1447.4 540.3 1448.3 539.3C1449.8 537.6 1450.5 533.2 1450.6 535.3C1452.8 564.9 1451.8 601.8 1453 602.6C1454.1 603.4 1453.1 568.5 1455.3 538.5C1455.4 537.2 1456.6 540.2 1457.6 539.9C1459 539.6 1459.8 535.4 1460 537.1C1462.2 565.1 1460.6 568.2 1462.3 599.2C1462.9 610.6 1462.5 611.1 1464.6 621.8C1464.9 623 1465.7 622.6 1467 623C1468.1 623.4 1468.2 623.1 1469.3 623.4C1470.5 623.7 1470.5 624.3 1471.6 624.2C1472.8 624.1 1473.9 624.3 1474 623C1476.2 580.1 1474 577.2 1476.3 535.8C1476.4 534.4 1477.9 538.1 1478.6 537.5C1480.2 536.2 1480.8 529.2 1481 531.8C1483.1 561.1 1481.5 566.7 1483.3 601.4C1483.8 611.8 1483.6 612.3 1485.6 622.1C1485.9 623.5 1486.7 623.5 1487.9 623.8C1489 624.1 1489.4 622.7 1490.3 623.2C1491.7 624.1 1491.6 626.7 1492.6 626.5C1493.9 626.3 1493.7 622.4 1494.9 622.3C1496.1 622.2 1497.2 628.3 1497.3 626.2C1499.5 588.4 1497.3 583.5 1499.6 542.6C1499.7 541.4 1501.1 542.9 1501.9 542.1C1503.4 540.8 1504.1 536.6 1504.3 538.5C1506.5 566.8 1504.8 570.6 1506.6 602.6C1507.1 611.1 1507.2 611.3 1508.9 619.6C1509.5 622.1 1509.8 623.3 1511.3 624.3C1512.1 624.8 1512.3 623 1513.6 622.6C1514.6 622.3 1514.8 623.1 1515.9 622.9C1517.1 622.8 1517.5 621.4 1518.3 622C1519.8 623.2 1520.5 628.8 1520.6 626.5C1522.8 587.1 1520.7 581.2 1522.9 538.7C1523 537.6 1524.5 539.8 1525.3 539.2C1526.8 538.1 1527.4 533.4 1527.6 535.4C1529.8 565.7 1528.1 569.6 1529.9 603.8C1530.4 613.3 1530.3 613.6 1532.3 622.6C1532.6 624.3 1533.2 624.4 1534.6 625.1C1535.5 625.6 1535.8 625.1 1536.9 625C1538.1 624.9 1538.2 625.1 1539.3 624.7C1540.5 624.3 1540.3 623.7 1541.6 623.3C1542.7 623 1542.8 623.5 1543.9 623.3C1545.1 623.1 1545.1 622.9 1546.2 622.6C1547.4 622.3 1548.5 623.4 1548.6 622.2C1550.8 580 1548.6 578 1550.9 536C1551 534.8 1552.5 536.5 1553.2 535.8C1554.8 534.3 1555.4 529.5 1555.6 531.6C1557.8 561.6 1556.1 565.8 1557.9 599.9C1558.4 609.9 1558.3 610.1 1560.2 619.9C1560.7 621.9 1561.1 622 1562.6 623.5C1563.5 624.4 1563.7 624.6 1564.9 624.8C1566 625 1566.3 624.9 1567.2 624.3C1568.6 623.4 1568.4 621.7 1569.6 621.7C1570.7 621.7 1571.8 625.9 1571.9 624.3C1574.1 584.2 1572 581 1574.2 538.4C1574.3 536.2 1575.1 536.1 1576.6 534.7C1577.4 533.9 1578.8 532.8 1578.9 534C1581.2 568.7 1579.3 570.3 1581.2 606.5C1581.6 614 1581.8 614.2 1583.6 621.3C1584.1 623.6 1584.3 624.1 1585.9 625.5C1586.7 626.1 1587.1 625.6 1588.2 625.4C1589.4 625.2 1590.5 625.9 1590.6 624.7C1592.8 580.1 1590.7 579 1592.9 533.8C1593 531.4 1594 531.7 1595.2 529.6C1596.3 527.7 1597.4 524.5 1597.5 525.9C1599.8 560.6 1598 564.5 1599.9 602.9C1600.3 611.4 1600.5 611.5 1602.2 619.8C1602.9 623 1603 624.8 1604.5 626.1C1605.3 626.7 1605.5 624 1606.9 623.5C1607.8 623.1 1609.1 625.5 1609.2 624.3C1611.5 582.5 1609.3 580.3 1611.5 537.6C1611.6 536.2 1613 537.1 1613.9 536.1C1615.4 534.2 1616.1 529.4 1616.2 531.6C1618.4 564.6 1616.6 569 1618.5 606.3C1618.9 614 1618.9 614.7 1620.9 621.7C1621.2 622.8 1622.3 621.7 1623.2 622.5C1624.6 623.7 1624.2 625.4 1625.5 625.7C1626.6 625.9 1626.5 624.1 1627.9 623.4C1628.8 622.9 1630.1 624.4 1630.2 623.2C1632.5 581.3 1630.3 578.7 1632.5 537.3C1632.6 536.1 1634.1 538.7 1634.9 538.2C1636.4 537.1 1637 532 1637.2 534C1639.4 565.1 1637.6 569.3 1639.5 604.4C1639.9 612 1640.2 612.1 1641.9 619.5C1642.5 622.2 1644.1 627.1 1644.2 624.6C1646.4 579.6 1644.6 557.4 1646.5 524.5C1646.9 524.5 1646.8 535.5 1648.9 545.1C1649.1 546.3 1650.9 547.2 1651.2 546.2C1653.2 539.5 1651.6 537.6 1653.5 529.6C1653.9 527.8 1655.7 525 1655.8 526.7C1658.1 559.2 1656.4 562.3 1658.2 597.9C1658.8 609.4 1658.5 609.8 1660.5 620.9C1660.8 622.5 1661.5 622.6 1662.8 623.3C1663.8 623.8 1664 623.5 1665.2 623.3C1666.4 623.2 1667.4 623.8 1667.5 622.7C1669.8 576.6 1667.6 573.7 1669.8 528.9C1669.9 527.6 1671.5 531.1 1672.2 530.4C1673.8 528.9 1674.3 524.5 1674.5 524.6C1676.7 556.3 1675 561.9 1676.8 599.1C1677.4 609.7 1677.2 609.9 1679.2 620.2C1679.6 622.3 1680 622.6 1681.5 623.8C1682.3 624.5 1682.7 624 1683.8 624.1C1685 624.2 1686.1 625.3 1686.2 624.2C1688.4 581.6 1686.3 580.2 1688.5 536.6C1688.6 533.8 1689.6 531.8 1690.8 531.5C1691.9 531.3 1691.9 535.4 1693.2 535.7C1694.2 535.9 1695.4 530.9 1695.5 532.7C1697.7 566.5 1695.9 569.8 1697.8 606.8C1698.2 614 1698.2 614.5 1700.2 621.1C1700.5 622.4 1701.4 621.7 1702.5 622.6C1703.7 623.6 1704.7 626.2 1704.8 624.7C1707.1 578.1 1704.9 572.1 1707.2 526.4C1707.2 524.6 1708.4 529.8 1709.5 529.6C1710.7 529.4 1711.7 524.5 1711.8 525.7C1714 559.2 1712.3 563.3 1714.1 600.9C1714.6 610.2 1714.6 610.4 1716.5 619.5C1717 622 1717.2 622.5 1718.8 624.1C1719.5 624.8 1720 624.3 1721.1 624C1722.4 623.8 1723.4 624.3 1723.5 623C1725.7 577.2 1723.6 575.9 1725.8 529.9C1725.9 528.3 1727 527.6 1728.1 527.7C1729.3 527.7 1729.2 529.9 1730.5 530C1731.6 530.1 1732.7 526.8 1732.8 528.2C1735 563.2 1733.2 565.5 1735.1 602.8C1735.6 611.4 1735.7 611.5 1737.5 619.8C1738 622.5 1738.3 623.6 1739.8 624.7C1740.6 625.3 1742.1 624.6 1742.1 623.2C1744.4 577.4 1742.2 575.8 1744.5 530.4C1744.5 529.2 1745.9 530.6 1746.8 529.9C1748.2 528.9 1749 525.2 1749.1 526.9C1751.3 560.4 1749.7 563.7 1751.5 600.3C1752 611 1751.7 611.5 1753.8 621.6C1754.1 623.1 1754.8 623.1 1756.1 623.6C1757.1 624 1757.5 622.9 1758.5 623.3C1759.8 624 1760.7 627.5 1760.8 625.8C1763 581.1 1760.9 575.4 1763.1 530.6C1763.2 529 1764.1 532.6 1765.5 533C1766.5 533.3 1766.9 532.8 1767.8 532C1769.2 530.7 1770 527 1770.1 528.8C1772.3 563.8 1770.5 567.3 1772.4 605.5C1772.8 612.6 1772.9 612.9 1774.8 619.6C1775.3 621.4 1775.8 621.2 1777.1 622.6C1778.1 623.7 1779.4 625.9 1779.4 624.5C1781.7 583.1 1779.5 580 1781.8 536.9C1781.8 535.6 1783.2 536.6 1784.1 535.8C1785.5 534.6 1786.2 531.2 1786.4 532.8C1788.6 550 1787.7 553.1 1788.8 573.3C1790 595.9 1790.2 624.2 1791.1 618.5C1792.6 608.9 1792 550.7 1793.4 542.8C1794.4 537.6 1794.3 567.6 1795.8 592.4C1796.6 606.7 1797.4 627.3 1798.1 621C1799.8 605.1 1799 556.9 1800.4 548.1C1801.3 542.7 1801.5 570.4 1802.8 592.7C1803.8 610.1 1804.4 630.5 1805.1 627.4C1806.7 609.9 1805.6 566.8 1807.4 543.2C1807.9 536.5 1809.1 555 1809.8 566.9C1811.4 598.2 1811.1 630.5 1812.1 629.5C1813.4 622.3 1813 553.4 1814.4 542.2C1815.3 535.6 1815.4 568 1816.8 593.8C1817.7 611.7 1817.7 626.3 1819.1 629.6C1820 630.5 1820.4 617.3 1821.4 605C1822.7 589.5 1822.9 570.3 1823.7 574C1825.2 580.1 1825.1 628.9 1826.1 624.5C1827.4 618.4 1826.8 567.7 1828.4 552.9C1829.1 546.8 1829.7 567.8 1830.7 582.6C1832 601.3 1832.3 625.7 1833.1 620C1834.6 609.4 1834 557.7 1835.4 550.1C1836.3 545.2 1836.4 572.6 1837.7 595.1C1838.8 612.8 1839.4 630.5 1840.1 630.5C1841.7 613.3 1840.6 568.9 1842.4 546.1C1842.9 539.3 1843.9 558.7 1844.7 571.3C1846.3 594.8 1846.1 621.6 1847.1 618.3C1848.4 613.9 1849.4 555.8 1849.4 555.8" fill="none" stroke="#b8a0e0" stroke-width="1.6" stroke-linejoin="round"/><path d="M1177.8 547.8C1177.8 547.8 1179 565.1 1180.1 582.3C1181.3 599.4 1181.7 622.6 1182.5 616.5C1184 603.5 1183.5 547.1 1184.8 544C1185.9 541.4 1185.2 574.7 1187.1 605.1C1187.5 610.9 1189.1 620.7 1189.5 616.5C1191.5 590.3 1190.5 548.2 1191.8 544.3C1192.8 541.1 1192.5 573.4 1194.1 602.4C1194.8 614.3 1195.9 630.5 1196.5 626.2C1198.2 605.5 1197.4 554.4 1198.8 548.5C1199.8 544.1 1199.4 577.1 1201.1 605.7C1201.7 615.7 1203 630.5 1203.5 625.7C1205.3 601.9 1204.4 553.3 1205.8 546C1206.7 540.9 1206.5 573.5 1208.1 601C1208.9 614.3 1209.8 630.5 1210.4 627.7C1212.2 610.5 1211.4 560.5 1212.8 554.2C1213.7 549.7 1213.5 580.1 1215.1 606C1215.9 618.1 1216.9 630.5 1217.4 630.1C1219.3 605.6 1218.1 561.8 1219.8 543.2C1220.4 535.8 1221 560.7 1222.1 578.1C1223.3 597.2 1223.6 621.7 1224.4 616.2C1225.9 606.3 1225.4 551.9 1226.8 547.1C1227.8 543.5 1227.4 573.4 1229.1 599.5C1229.8 609.8 1230.9 625.9 1231.4 620C1233.3 598.3 1232.4 551.3 1233.8 544.4C1234.7 539.6 1234.7 570.4 1236.1 596.5C1237 613.3 1237.7 630.5 1238.4 630.1C1240 615.8 1239.3 565.9 1240.8 555C1241.6 549 1241.8 575.7 1243.1 596.4C1244.1 613 1244.7 630.5 1245.4 629.6C1247.1 613.8 1246.3 562.1 1247.8 551.5C1248.6 545.4 1248.8 573.8 1250.1 596.1C1251.1 613.1 1251.7 630.5 1252.4 630.1C1254.1 613.8 1252.7 581.3 1254.8 549.7C1255 545.8 1256.8 554.3 1257.1 559.1C1259.1 594.1 1258.3 630.5 1259.4 629.3C1260.7 626.5 1259.7 578.1 1261.8 548.6C1262.1 544 1262.1 555.8 1264.1 561.1C1264.4 562 1265.7 561.8 1266.4 561C1268.1 559.1 1268.5 553.4 1268.7 555.7C1270.8 575.2 1269.2 580.2 1271.1 604.6C1271.5 610.5 1273.1 620.6 1273.4 616.3C1275.4 591.4 1274.1 560.1 1275.7 546.1C1276.4 540.1 1277.2 561.2 1278.1 576.3C1279.5 600.5 1279.5 630.1 1280.4 624.8C1281.8 616.5 1280.7 577.3 1282.7 549.1C1283 544.9 1284.7 554.5 1285.1 560.1C1287.1 595 1286.3 630.5 1287.4 630.1C1288.6 628.9 1287.5 592.2 1289.7 555.4C1289.8 553.9 1291.3 553.1 1292.1 553.7C1293.6 554.9 1293.4 559.5 1294.4 559C1295.7 558.4 1296.2 549.4 1296.7 551.5C1298.5 558.1 1298.3 563.9 1299.1 576.4C1300.6 600.8 1300.4 629.9 1301.4 625.3C1302.8 618.5 1301.6 583 1303.7 553.5C1303.9 550.6 1305.8 556.8 1306.1 560.4C1308.1 587.9 1307.3 617 1308.4 615.7C1309.6 614.4 1308.6 585.3 1310.7 555.2C1311 551.8 1312.2 547.7 1313.1 548.7C1314.6 550.7 1313.5 556.7 1315.4 561.3C1315.8 562.3 1317.6 558.7 1317.7 559.9C1320 593.1 1317.9 601.1 1320 630.1C1320.3 630.5 1322.2 627.1 1322.4 623.7C1324.5 584.1 1322.6 578.1 1324.7 544.1C1324.9 541.3 1326.1 547 1327 550.1C1328.4 554.8 1327.8 555.1 1329.4 559.7C1330.1 561.7 1330.6 563.4 1331.7 563.3C1332.9 563.2 1332.6 560.2 1334 559.4C1334.9 558.9 1335.9 561.6 1336.4 560.7C1338.2 557 1338.3 546.7 1338.7 550.3C1340.6 567.1 1339.5 575.8 1341 601.3C1341.9 615.7 1342.8 630.5 1343.4 630.1C1345.1 608.3 1344 561.2 1345.7 543C1346.4 535.5 1347 560.9 1348 578.7C1349.3 601 1349.5 629.2 1350.4 623.3C1351.8 613.1 1350.5 580.8 1352.7 546.5C1352.8 544.4 1354.4 548.3 1355 550.5C1356.7 555.9 1355.5 557.7 1357.4 561.7C1357.8 562.6 1359.3 559.4 1359.7 560.4C1361.7 565.7 1361.5 567.3 1362 574.4C1363.8 597.6 1363.4 625.5 1364.4 620.9C1365.8 614 1364.4 585.6 1366.7 551.5C1366.8 550.1 1368.5 548.9 1369 549.8C1370.9 553.3 1369.4 556.2 1371.4 560.3C1371.8 561.2 1372.9 559.1 1373.7 559.8C1375.3 561.1 1375.8 561.7 1376 564.2C1378.2 591.8 1377.3 623.8 1378.3 619.9C1379.7 614.8 1379.3 553.8 1380.7 546.1C1381.6 541 1381.6 570.3 1383 594.4C1383.9 610.1 1384.7 630.5 1385.3 625.7C1387 608.3 1386.1 560.1 1387.7 546C1388.4 539.2 1388.8 564.9 1390 583.9C1391.1 600.2 1391.6 622.2 1392.3 616.5C1393.9 604.4 1393.4 551.3 1394.7 548.4C1395.7 545.9 1395.3 577.1 1397 605.7C1397.6 616 1398.8 630.5 1399.3 626.1C1401.2 605.9 1399.6 582.7 1401.7 553.7C1401.9 550.5 1402.2 559.1 1404 561.6C1404.6 562.4 1405.9 561.4 1406.3 560.2C1408.3 554.4 1408 544.6 1408.7 547.6C1410.4 555.7 1409.9 565 1411 582.4C1412.3 603.6 1412.5 630.5 1413.3 624.7C1414.9 612.4 1414.1 558.3 1415.7 544.7C1416.4 538 1416.9 585.4 1418 584C1419.2 582.4 1418.1 560.8 1420.3 538.6C1420.5 537.2 1421.4 537.5 1422.7 537C1423.7 536.6 1424.9 535.8 1425 536.9C1427.3 579.3 1425.1 580.8 1427.3 624C1427.4 626.1 1429.6 629.4 1429.7 627.5C1431.9 582.1 1429.7 576.7 1432 529.3C1432 528.1 1433.3 530.6 1434.3 530.2C1435.7 529.8 1436.6 526.2 1436.6 527.8C1438.9 572.2 1436.8 575.2 1439 622.2C1439.1 625.8 1439.6 627.2 1441.3 629.1C1442 629.9 1443.6 629 1443.6 627.6C1445.9 584.8 1443.7 583.6 1446 540.8C1446 539.4 1447.4 540.3 1448.3 539.3C1449.8 537.6 1450.5 533.1 1450.6 535.3C1452.9 575.1 1451.8 622.4 1453 623.2C1454.1 624 1453 578.8 1455.3 538.5C1455.4 537.1 1456.6 540.2 1457.6 539.9C1459 539.6 1459.9 535.4 1460 537.1C1462.2 577.5 1460.1 580.9 1462.3 624.3C1462.4 626.8 1463.1 627.8 1464.6 628.9C1465.4 629.5 1465.8 627.6 1467 627.7C1468.1 627.7 1468.1 628.8 1469.3 629C1470.4 629.2 1470.5 628.9 1471.6 628.5C1472.8 628.1 1473.9 628.8 1474 627.5C1476.2 582.4 1474 579.4 1476.3 535.8C1476.4 534.4 1477.9 538.1 1478.6 537.5C1480.2 536.2 1480.8 529.1 1481 531.8C1483.1 572.4 1481.1 578.2 1483.3 624.1C1483.4 626.8 1484 627.1 1485.6 629.1C1486.3 630 1486.8 629.8 1487.9 629.8C1489.1 629.8 1489.1 629.2 1490.3 629.1C1491.4 629 1491.5 629.7 1492.6 629.5C1493.8 629.3 1493.8 628.3 1494.9 628.3C1496.1 628.2 1497.2 630.5 1497.3 629.2C1499.5 587.6 1497.3 585 1499.6 542.6C1499.7 541.4 1501.1 542.9 1501.9 542.1C1503.4 540.8 1504.2 536.5 1504.3 538.5C1506.5 577.4 1504.4 581.4 1506.6 623.9C1506.7 626.5 1507.3 627.2 1508.9 628.7C1509.7 629.3 1510.1 628.1 1511.3 628.1C1512.4 628.1 1512.4 628.5 1513.6 628.7C1514.8 628.8 1514.8 628.8 1515.9 628.6C1517.1 628.4 1517.2 627.5 1518.3 627.7C1519.6 628.1 1520.5 630.5 1520.6 629.8C1522.9 586.7 1520.7 582.8 1522.9 538.7C1523 537.6 1524.5 539.8 1525.3 539.2C1526.8 538.1 1527.5 533.4 1527.6 535.4C1529.8 575.9 1527.7 580.2 1529.9 624.4C1530 626.5 1530.9 626.3 1532.3 627.9C1533.2 629 1533.4 629.7 1534.6 629.8C1535.7 629.9 1535.6 628.6 1536.9 628.2C1538 627.8 1538.1 628 1539.3 628.2C1540.4 628.4 1540.4 628.7 1541.6 628.8C1542.7 628.9 1542.8 628.7 1543.9 628.4C1545.1 628.1 1545 627.7 1546.2 627.6C1547.4 627.4 1548.5 628.9 1548.6 627.8C1550.9 583.1 1548.6 580.8 1550.9 536C1551 534.8 1552.5 536.5 1553.2 535.8C1554.8 534.3 1555.5 529.4 1555.6 531.6C1557.8 573.2 1555.7 577.7 1557.9 623.4C1558.1 626.8 1558.6 628 1560.2 629.8C1560.9 630.5 1561.3 628.7 1562.6 628.4C1563.7 628.2 1563.8 628.5 1564.9 628.7C1566.1 629 1566.2 629.6 1567.2 629.4C1568.5 629.2 1568.3 628 1569.6 627.7C1570.6 627.5 1571.8 629.7 1571.9 628.5C1574.2 585.1 1572 583.1 1574.2 538.4C1574.3 536.2 1575.1 536.1 1576.6 534.7C1577.4 533.9 1578.8 532.8 1578.9 534C1581.2 577.6 1579 579.4 1581.2 624.3C1581.4 626.9 1582 627.2 1583.6 629C1584.3 629.9 1584.8 629.7 1585.9 629.7C1587.1 629.6 1587 628.7 1588.2 628.7C1589.4 628.6 1590.5 630.5 1590.6 629.5C1592.8 583.3 1590.7 581.4 1592.9 533.8C1593 531.4 1594 531.7 1595.2 529.6C1596.3 527.7 1597.4 524.5 1597.5 525.9C1599.8 570.4 1597.7 574.5 1599.9 622.8C1600 626.3 1600.5 626.8 1602.2 629.4C1602.8 630.2 1603.4 629.9 1604.5 629.7C1605.8 629.4 1605.7 628.9 1606.9 628.5C1608 628.1 1609.2 629.2 1609.2 628.1C1611.5 583.7 1609.3 582.2 1611.5 537.6C1611.6 536.2 1613 537.1 1613.9 536.1C1615.4 534.2 1616.1 529.4 1616.2 531.6C1618.4 573.6 1616.3 578.3 1618.5 624.4C1618.7 626.8 1619.3 627.4 1620.9 628.7C1621.6 629.3 1622.1 628.1 1623.2 628.3C1624.4 628.5 1624.3 629.4 1625.5 629.5C1626.7 629.5 1626.7 628.6 1627.9 628.5C1629 628.4 1630.1 630.3 1630.2 629.1C1632.5 584.7 1630.3 581.6 1632.5 537.3C1632.6 536.1 1634.1 538.7 1634.9 538.2C1636.4 537.1 1637.1 531.9 1637.2 534C1639.4 574.1 1637.3 578.5 1639.5 622.5C1639.7 625.4 1640.2 625.7 1641.9 627.9C1642.5 628.8 1644.1 629.9 1644.2 628.7C1646.5 578.2 1644.6 559.4 1646.5 524.5C1646.9 524.5 1646.8 535.5 1648.9 545.1C1649.1 546.3 1650.9 547.2 1651.2 546.2C1653.2 539.5 1651.6 537.6 1653.5 529.6C1653.9 527.8 1655.8 525 1655.8 526.7C1658.1 571.9 1656 575.3 1658.2 623.4C1658.3 626.2 1658.9 626.6 1660.5 628.6C1661.2 629.4 1661.8 629.1 1662.8 628.9C1664.1 628.7 1663.9 627.8 1665.2 627.6C1666.3 627.4 1667.5 629.1 1667.5 627.9C1669.8 579.8 1667.6 576.4 1669.8 528.9C1669.9 527.6 1671.5 531.1 1672.2 530.4C1673.8 528.9 1674.4 524.5 1674.5 524.6C1676.7 568.4 1674.6 574.4 1676.8 623.6C1676.9 625.9 1677.6 626.2 1679.2 627.6C1679.9 628.4 1680.3 627.8 1681.5 627.9C1682.7 628.1 1682.7 627.8 1683.8 628.1C1685 628.4 1686.1 630.3 1686.2 629.1C1688.4 584.6 1686.3 582.6 1688.5 536.6C1688.6 533.8 1689.6 531.8 1690.8 531.5C1691.9 531.3 1691.9 535.4 1693.2 535.7C1694.2 535.9 1695.4 530.9 1695.5 532.7C1697.7 575.2 1695.6 578.7 1697.8 624.3C1698 627.1 1698.6 628.3 1700.2 629.4C1701 629.9 1701.3 627.7 1702.5 627.6C1703.6 627.5 1704.8 630.3 1704.8 629C1707.1 579.7 1704.9 574.3 1707.2 526.4C1707.2 524.6 1708.4 529.8 1709.5 529.6C1710.7 529.4 1711.7 524.5 1711.8 525.7C1714 570.8 1711.9 575.2 1714.1 624C1714.2 626.2 1715 626.3 1716.5 627.8C1717.3 628.6 1717.6 628.3 1718.8 628.7C1720 629.2 1720 629.7 1721.1 629.6C1722.4 629.4 1723.4 629.4 1723.5 628C1725.7 579.6 1723.5 578.5 1725.8 529.9C1725.9 528.3 1727 527.6 1728.1 527.7C1729.3 527.7 1729.2 529.9 1730.5 530C1731.6 530.1 1732.7 526.8 1732.8 528.2C1735.1 574 1732.9 576.5 1735.1 624.4C1735.3 627.2 1735.8 627.8 1737.5 629.4C1738.2 630.1 1738.6 629.1 1739.8 629.1C1741 629 1742.1 630.4 1742.1 629.3C1744.4 581.1 1742.2 578.9 1744.5 530.4C1744.5 529.2 1745.9 530.6 1746.8 529.9C1748.2 528.9 1749 525.2 1749.1 526.9C1751.4 571.4 1749.3 574.8 1751.5 622.3C1751.6 626 1752 626.6 1753.8 629.4C1754.4 630.3 1755 629.8 1756.1 629.7C1757.3 629.5 1757.3 628.8 1758.5 628.7C1759.6 628.7 1760.7 630.5 1760.8 629.4C1763.1 581.5 1760.9 577.2 1763.1 530.6C1763.2 529 1764.1 532.6 1765.5 533C1766.5 533.3 1766.9 532.8 1767.8 532C1769.2 530.7 1770 527 1770.1 528.8C1772.4 572.5 1770.2 576.1 1772.4 622.9C1772.6 625.6 1773.2 625.9 1774.8 627.8C1775.5 628.7 1775.9 628.4 1777.1 628.5C1778.3 628.6 1779.4 629.3 1779.4 628.1C1781.7 583.5 1779.5 581.8 1781.8 536.9C1781.8 535.6 1783.2 536.6 1784.1 535.8C1785.5 534.6 1786.2 531.2 1786.4 532.8C1788.6 550 1787.7 553.1 1788.8 573.3C1790 595.9 1790.2 624.2 1791.1 618.5C1792.6 608.9 1792 550.7 1793.4 542.8C1794.4 537.6 1794.3 567.6 1795.8 592.4C1796.6 606.7 1797.4 627.3 1798.1 621C1799.8 605.1 1799 556.9 1800.4 548.1C1801.3 542.7 1801.5 570.4 1802.8 592.7C1803.8 610.1 1804.4 630.5 1805.1 627.4C1806.7 609.9 1805.6 566.8 1807.4 543.2C1807.9 536.5 1809.1 555 1809.8 566.9C1811.4 598.2 1811.1 630.5 1812.1 629.5C1813.4 622.3 1813 553.4 1814.4 542.2C1815.3 535.6 1815.4 568 1816.8 593.8C1817.7 611.7 1817.1 617.3 1819.1 629.6C1819.5 630.5 1821.1 626.6 1821.4 623.2C1823.5 598.8 1822.6 573.7 1823.7 574C1824.9 574.3 1825.1 628.9 1826.1 624.5C1827.4 618.4 1826.8 567.7 1828.4 552.9C1829.1 546.8 1829.7 567.8 1830.7 582.6C1832 601.3 1832.3 625.7 1833.1 620C1834.6 609.4 1834 557.7 1835.4 550.1C1836.3 545.2 1836.4 572.6 1837.7 595.1C1838.8 612.8 1839.4 630.5 1840.1 630.5C1841.7 613.3 1840.6 568.9 1842.4 546.1C1842.9 539.3 1843.9 558.7 1844.7 571.3C1846.3 594.8 1846.1 621.6 1847.1 618.3C1848.4 613.9 1849.4 555.8 1849.4 555.8" fill="none" stroke="#68d5d8" stroke-width="2.0" stroke-linejoin="round"/><path d="M1177 643.5H1850" stroke="#2f4473" stroke-width="1" fill="none"/><path d="M1178.5 643V648.5" stroke="#2f4473" stroke-width="1" fill="none"/><path d="M1332.5 643V648.5" stroke="#2f4473" stroke-width="1" fill="none"/><path d="M1486.5 643V648.5" stroke="#2f4473" stroke-width="1" fill="none"/><path d="M1640.5 643V648.5" stroke="#2f4473" stroke-width="1" fill="none"/><path d="M1793.5 643V648.5" stroke="#2f4473" stroke-width="1" fill="none"/><path d="M1849.5 643V648.5" stroke="#2f4473" stroke-width="1" fill="none"/><text x="1169.5" y="647.1" font-size="12" fill="#333" text-anchor="end">0</text><text x="1169.5" y="625.7" font-size="12" fill="#333" text-anchor="end">2</text><text x="1169.5" y="604.3" font-size="12" fill="#333" text-anchor="end">4</text><text x="1169.5" y="582.9" font-size="12" fill="#333" text-anchor="end">6</text><text x="1169.5" y="561.6" font-size="12" fill="#333" text-anchor="end">8</text><text x="1169.5" y="540.2" font-size="12" fill="#333" text-anchor="end">10</text><text x="1169.5" y="528.1" font-size="12" fill="#333" text-anchor="end">11.13</text><text x="1178.8" y="661" font-size="12" fill="#333" text-anchor="middle" textLength="118" lengthAdjust="spacingAndGlyphs">2025-09-24 00:00:00</text><text x="1332.7" y="661" font-size="12" fill="#333" text-anchor="middle" textLength="118" lengthAdjust="spacingAndGlyphs">2025-09-24 05:30:00</text><text x="1486.6" y="661" font-size="12" fill="#333" text-anchor="middle" textLength="118" lengthAdjust="spacingAndGlyphs">2025-09-24 11:00:00</text><text x="1640.5" y="661" font-size="12" fill="#333" text-anchor="middle" textLength="118" lengthAdjust="spacingAndGlyphs">2025-09-24 16:30:00</text><text x="1850.4" y="661" font-size="12" fill="#333" text-anchor="middle" textLength="118" lengthAdjust="spacingAndGlyphs">2025-09-24 23:55:00</text><text x="1184.8" y="506.5" font-size="12" fill="#546b91" text-anchor="middle" textLength="42" lengthAdjust="spacingAndGlyphs">kW/kW</text><circle cx="1709.2" cy="510.2" r="6" fill="#b7a3df"/><text x="1720" y="513.8" font-size="12" fill="#333">主机瞬时COP</text><circle cx="1809.3" cy="510.2" r="6" fill="#96e1e4"/><text x="1820" y="513.8" font-size="12" fill="#333">系统COP</text></svg></div>
<div class="card" style="left:239px;top:688px;width:830px;height:230px"><div class="bar" style="left:20px;top:21px"></div><div class="ct" style="left:37px;top:18px">制冷量预测</div>
<div class="abs" style="left:40px;top:56px;font-size:14px;line-height:20px;white-space:nowrap;color:#333;letter-spacing:-0.08px">预计2025-09-24 22:00:00~2025-09-24 23:00:00进入负荷稳定阶段，制冷量预计为212~230kW</div>
<div class="bar" style="left:20px;top:94px"></div><div class="ct" style="left:37px;top:91px">AI决策</div>
<div class="abs" style="left:40px;top:129px;font-size:14px;line-height:20px;white-space:nowrap;color:#333;letter-spacing:-0.1px">建议主机出水温度12.0℃</div>
<div class="btn" style="left:20px;top:184.4px;width:54px">详情</div>
<div class="btn" style="left:84px;top:184.4px;width:95px">AI决策详情</div>
<svg class="abs" style="left:649px;top:36.7px" width="161" height="160" viewBox="0 0 161 160">
<defs>
<filter id="bl" x="-10%" y="-10%" width="120%" height="120%"><feGaussianBlur stdDeviation="0.55"/></filter>
<filter id="bl2" x="-30%" y="-30%" width="160%" height="160%"><feGaussianBlur stdDeviation="5"/></filter>
<filter id="gl" x="-30%" y="-30%" width="160%" height="160%"><feGaussianBlur stdDeviation="1.6"/></filter>
<linearGradient id="pl" x1="0" y1="0" x2="1" y2="0.6"><stop offset="0" stop-color="#f4f0f6"/><stop offset="0.55" stop-color="#f7f9fb"/><stop offset="1" stop-color="#e6f4f5"/></linearGradient>
<linearGradient id="pls" x1="0" y1="0" x2="1" y2="0"><stop offset="0" stop-color="#d9cfdf"/><stop offset="1" stop-color="#e4dfe9"/></linearGradient>
<linearGradient id="prs" x1="0" y1="0" x2="1" y2="0"><stop offset="0" stop-color="#e2e6ee"/><stop offset="1" stop-color="#d9eef0"/></linearGradient>
<linearGradient id="htop" x1="0" y1="0" x2="1" y2="1"><stop offset="0" stop-color="#74efc2"/><stop offset="1" stop-color="#62e3c0"/></linearGradient>
<linearGradient id="hfr" x1="0" y1="0" x2="1" y2="1"><stop offset="0" stop-color="#22c58c"/><stop offset="1" stop-color="#12a57d"/></linearGradient>
<linearGradient id="hrt" x1="0" y1="0" x2="1" y2="1"><stop offset="0" stop-color="#45d3a8"/><stop offset="1" stop-color="#2bb4a0"/></linearGradient>
<linearGradient id="bfr" x1="0" y1="0" x2="0" y2="1"><stop offset="0" stop-color="#3b7f98"/><stop offset="1" stop-color="#5aa8bd"/></linearGradient>
<linearGradient id="brt" x1="0" y1="0" x2="0" y2="1"><stop offset="0" stop-color="#3f8aa0"/><stop offset="1" stop-color="#4fa0b4"/></linearGradient>
</defs>
<rect width="161" height="160" fill="#fdfefe"/>
<g filter="url(#bl)">
<ellipse cx="84" cy="118" rx="50" ry="20" fill="#dff5f3" filter="url(#bl2)"/>
<path d="M21.5 109.5 L21.5 115 L88.6 147 L143.5 119.5 L143.5 114.3 L88.6 141.8Z" fill="url(#pls)"/>
<path d="M88.6 141.8 L143.5 114.3 L143.5 119.5 L88.6 147Z" fill="url(#prs)"/>
<path d="M21.5 109.5 L76.4 82 L143.5 114.3 L88.6 141.8Z" fill="url(#pl)"/>
<ellipse cx="92" cy="112" rx="26" ry="10" fill="#6fe3d6" opacity=".55" filter="url(#gl)"/>
<path d="M47 100 L51 93 L66 98 L66 106 L60 111 L46 105Z" fill="#4a90a8"/>
<path d="M51 93 L66 98 L60 104 L46 99Z" fill="#6fb4c6"/>
<path d="M73 110 L78 102 L99 108 L99 117 L92 123 L73 116Z" fill="#4a90a8"/>
<path d="M78 102 L99 108 L92 115 L73 109Z" fill="#6fb4c6"/>
<path d="M62 88 L72 92 L70 100 L60 96Z" fill="#3f7f97"/>
<path d="M86 97 L96 94 L95 104 L85 106Z" fill="#3f7f97"/>
<path d="M57.4 64.7 L85.5 75 L85.5 97 L57.4 85.5Z" fill="url(#bfr)"/>
<path d="M85.5 75 L108.4 65.7 L108.4 87.6 L85.5 97Z" fill="url(#brt)"/>
<path d="M57.4 64.7 L80 56 L108.4 65.7 L85.5 75Z" fill="#2f7088"/>
<path d="M61 72 L82 79.5 L82 89 L61 81Z" fill="#7eb6c8"/>
<path d="M64 74.8 L71 77.3 L71 83.3 L64 80.7Z" fill="#a9d3de"/><path d="M73 78 L80 80.5 L80 86.5 L73 84Z" fill="#9ccad7"/>
<path d="M36.5 72 L46 67.5 L55 71 L55 81 L46 85.5 L36.5 81Z" fill="#6cc3cf"/>
<path d="M36.5 72 L46 67.5 L55 71 L46 75.5Z" fill="#97dde2"/>
<path d="M46 75.5 L55 71 L55 81 L46 85.5Z" fill="#4fa5b7"/>
<ellipse cx="107" cy="76" rx="6.5" ry="7.5" fill="#62bccb"/><ellipse cx="108" cy="76" rx="4" ry="5" fill="#8fdbe0"/>
<path d="M96 88 L108 82 L119 88 L119 97 L107 103 L96 97Z" fill="#5fb9c8"/>
<path d="M96 88 L108 82 L119 88 L107 94Z" fill="#93dde1"/>
<path d="M107 94 L119 88 L119 97 L107 103Z" fill="#4aa3b5"/>
<path d="M51 25 L76 15.6 L115.7 32.3 L89.7 39.6Z" fill="url(#htop)"/>
<ellipse cx="84" cy="27" rx="9" ry="4" fill="#3fcf9f" opacity=".7" transform="rotate(12 84 27)"/>
<path d="M89.7 39.6 L115.7 32.3 L115.7 59.4 L89.7 66.7Z" fill="url(#hrt)"/>
<path d="M51 25 L89.7 39.6 L89.7 66.7 L52.1 54.2Z" fill="url(#hfr)"/>
<path d="M54 29 L87 41.5 L87 63.5 L55 52.5Z" fill="#0f9a72" stroke="#52e0ae" stroke-width="0.8"/>
<ellipse cx="104.8" cy="47" rx="6.3" ry="8" fill="#2a8f8c"/><ellipse cx="105.3" cy="47" rx="4.6" ry="6.2" fill="#2f7f86"/>
<g transform="matrix(1 0.36 0 1 0 0)"><text x="71" y="31.2" font-size="24" font-weight="bold" fill="#7dffc9" text-anchor="middle" filter="url(#gl)">AI</text><text x="71" y="31.2" font-size="24" font-weight="bold" fill="#fff" text-anchor="middle">AI</text></g>
<path d="M60 7 L60.6 23" stroke="#1f9f86" stroke-width="2.2" stroke-linecap="round"/>
<ellipse cx="60.6" cy="23.5" rx="3" ry="1.6" fill="#2bb893"/>
<path d="M101.8 10 L96 29" stroke="#1b8f7c" stroke-width="1.7" stroke-linecap="round"/>
<circle cx="101.8" cy="9.6" r="2.5" fill="#15806f"/>
<ellipse cx="96" cy="29.5" rx="2.6" ry="1.4" fill="#2bb893"/>
</g></svg></div>
<div class="card" style="left:1079px;top:688px;width:830px;height:230px"><div class="bar" style="left:20px;top:21px"></div><div class="ct" style="left:37px;top:18px">冷冻水流量</div><div class="abs" style="left:806.5px;top:35.2px;width:17.2px;height:17.6px;border:1px solid #f1f1f1;border-radius:3px;background:#fff">
<svg class="abs" style="left:2.5px;top:2.9px" width="10.4" height="10.4" viewBox="0 0 11 11"><path d="M2.6 1.9H10.5M0.5 5.5H7.6M2.6 9.1H10.5" stroke="#444" stroke-width="0.9" fill="none"/><circle cx="1.6" cy="1.9" r="1" fill="#fff" stroke="#444" stroke-width="0.8"/><circle cx="8.2" cy="5.5" r="1.1" fill="#666" stroke="#444" stroke-width="0.6"/><circle cx="1.6" cy="9.1" r="1" fill="#fff" stroke="#444" stroke-width="0.8"/></svg></div><svg class="abs" style="left:20px;top:40px;overflow:hidden" width="790" height="183" viewBox="1099 728 790 183"><path d="M1138.5 784V875.2" stroke="#e4e4e7" stroke-width="1" stroke-dasharray="4 3" fill="none"/><path d="M1294.5 784V875.2" stroke="#e4e4e7" stroke-width="1" stroke-dasharray="4 3" fill="none"/><path d="M1449.5 784V875.2" stroke="#e4e4e7" stroke-width="1" stroke-dasharray="4 3" fill="none"/><path d="M1605.5 784V875.2" stroke="#e4e4e7" stroke-width="1" stroke-dasharray="4 3" fill="none"/><path d="M1760.5 784V875.2" stroke="#e4e4e7" stroke-width="1" stroke-dasharray="4 3" fill="none"/><path d="M1847.5 784V875.2" stroke="#e4e4e7" stroke-width="1" stroke-dasharray="4 3" fill="none"/><path d="M1849.5 784V875.2" stroke="#e4e4e7" stroke-width="1" stroke-dasharray="4 3" fill="none"/><path d="M1138 875.5H1850" stroke="#2f4473" stroke-width="1" fill="none"/><path d="M1138.5 875V880.5" stroke="#2f4473" stroke-width="1" fill="none"/><path d="M1294.5 875V880.5" stroke="#2f4473" stroke-width="1" fill="none"/><path d="M1449.5 875V880.5" stroke="#2f4473" stroke-width="1" fill="none"/><path d="M1605.5 875V880.5" stroke="#2f4473" stroke-width="1" fill="none"/><path d="M1760.5 875V880.5" stroke="#2f4473" stroke-width="1" fill="none"/><path d="M1849.5 875V880.5" stroke="#2f4473" stroke-width="1" fill="none"/><text x="1139.5" y="893" font-size="12" fill="#333" text-anchor="middle" textLength="118" lengthAdjust="spacingAndGlyphs">2025-09-24 00:00:00</text><text x="1295" y="893" font-size="12" fill="#333" text-anchor="middle" textLength="118" lengthAdjust="spacingAndGlyphs">2025-09-24 05:15:00</text><text x="1450.5" y="893" font-size="12" fill="#333" text-anchor="middle" textLength="118" lengthAdjust="spacingAndGlyphs">2025-09-24 10:30:00</text><text x="1606" y="893" font-size="12" fill="#333" text-anchor="middle" textLength="118" lengthAdjust="spacingAndGlyphs">2025-09-24 15:45:00</text><text x="1850.3" y="893" font-size="12" fill="#333" text-anchor="middle" textLength="118" lengthAdjust="spacingAndGlyphs">2025-09-24 23:55:00</text><text x="1144.2" y="766.5" font-size="12" fill="#546b91" text-anchor="middle" textLength="30" lengthAdjust="spacingAndGlyphs">m3/h</text><circle cx="1774" cy="770.3" r="6" fill="#b7a3df"/><text x="1785" y="773.9" font-size="12" fill="#333">冷冻水瞬时流量</text></svg></div>
<div class="abs" style="left:1913.8px;top:107.8px;width:2.3px;height:781px;background:linear-gradient(#7f7f7f 0,#7f7f7f 769px,#6d849c 770px);border-radius:1px"></div>
</body></html>
